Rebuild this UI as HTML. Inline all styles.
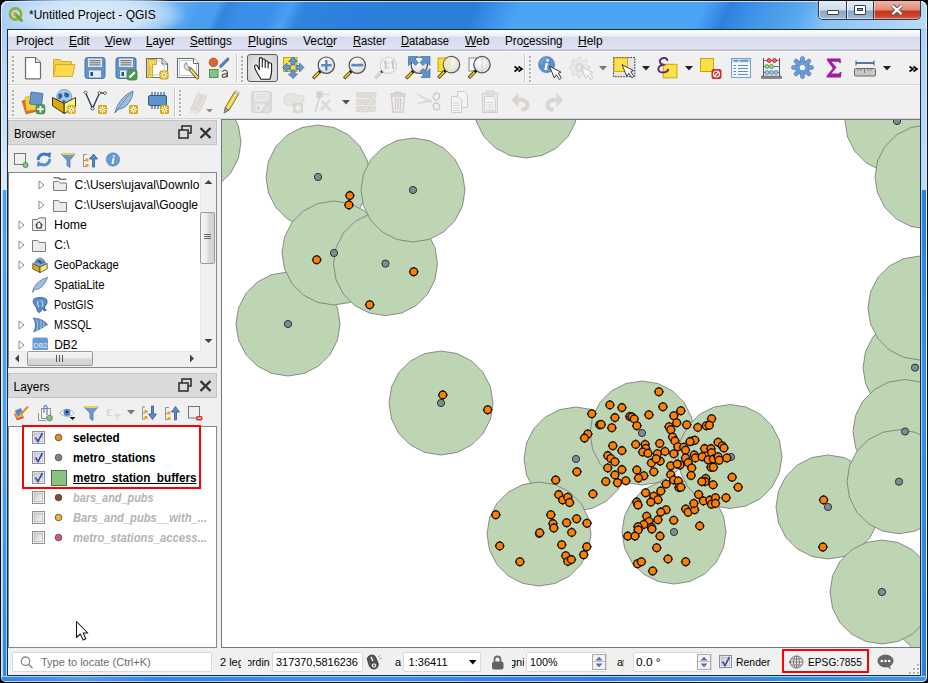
<!DOCTYPE html><html><head><meta charset="utf-8"><style>
*{margin:0;padding:0;box-sizing:border-box}
html,body{width:928px;height:683px;overflow:hidden;background:#000}
body{position:relative;font-family:"Liberation Sans",sans-serif;font-size:12px;color:#000}
div{position:absolute}
.t{white-space:pre;line-height:14px}
svg{position:absolute;overflow:visible}
</style></head><body><div style="left:0px;top:0px;width:928px;height:683px;background:#111;border-radius:8px 8px 6px 6px"></div><div style="left:1px;top:1px;width:926px;height:681px;border-radius:7px 7px 5px 5px;background:linear-gradient(112deg,#a9cdf3 0px,#b5d6f6 100px,#62acf2 178px,#4a9ef0 190px,#4a9ef0 262px,#2f80dc 285px,#3a90e8 320px,#2a84e0 350px,#2080e0 440px,#4aa0f0 475px,#4aa4f4 500px,#4aa4f4 650px,#3b8fe4 690px,#3b8fe4 720px,#5aaaf0 760px,#62b0f2 800px,#8cc6f6 840px,#b0d6f8 900px,#bfe0fa 960px);box-shadow:inset 1px 1px 0 rgba(255,255,255,.7),inset -1px -1px 0 rgba(255,255,255,.6)"></div><div style="left:1px;top:1px;width:926px;height:28px;border-radius:7px 7px 0 0;background:linear-gradient(115deg,#a9cdf3 6px,#b5d6f6 115px,#62acf2 165px,#4a9ef0 183px,#4a9ef0 198px,#3584dc 207px,#3a90e8 223px,#3a90e8 249px,#4aa0f0 264px,#2f84dc 278px,#2a80dc 323px,#2a7ed8 432px,#3a90e8 450px,#4aa4f4 473px,#4aa4f4 640px,#2f80dc 663px,#3a8ee6 681px,#5aaaf0 731px,#8cc4f4 758px,#b8dcf8 847px);box-shadow:inset 1px 1px 0 rgba(255,255,255,.7),inset -1px 0 0 rgba(255,255,255,.6)"></div><div style="left:0px;top:0px;width:240px;height:29px;background:radial-gradient(ellipse 95px 26px at 92px 15px,rgba(222,237,251,.95) 0%,rgba(208,228,249,.9) 60%,rgba(190,220,248,.6) 82%,rgba(180,215,246,0) 100%);border-radius:8px 0 0 0"></div><div style="left:2px;top:30px;width:5px;height:160px;background:linear-gradient(180deg,#aed0f4 0,#c8e0f8 100px,#dcebfa 160px)"></div><div style="left:2px;top:190px;width:5px;height:486px;background:linear-gradient(180deg,#4aa0f4 0,#4aa0f4 250px,#3a92ee 400px,#2f88e6 486px);box-shadow:inset 1px 0 0 #b8dcff,inset -1px 0 0 #a8d0fa"></div><div style="left:921px;top:30px;width:5px;height:160px;background:linear-gradient(180deg,#b0d4f8 0,#bcdcfa 160px)"></div><div style="left:921px;top:190px;width:5px;height:486px;background:linear-gradient(180deg,#2a80dc 0,#3a90ea 200px,#2a80dc 486px);box-shadow:inset 1px 0 0 #a8d0fa"></div><div style="left:2px;top:676px;width:924px;height:5px;background:linear-gradient(90deg,#2f86e4,#4aa0f0 80px,#2f86e4 160px,#3a92ea 340px,#2a80e0 600px,#3b92ea 900px);border-radius:0 0 4px 4px;box-shadow:inset 0 1px 0 #a8d0fa"></div><div style="left:7px;top:29px;width:914px;height:647px;background:#1c2a3a"></div><div style="left:8px;top:30px;width:912px;height:645px;background:#f0f0f0"></div><svg style="left:8px;top:7px" width="16" height="16" viewBox="0 0 16 16"><circle cx="7.5" cy="7" r="5.6" fill="none" stroke="#8fb32a" stroke-width="2.6"/><path d="M7 7 L13.5 13.5" stroke="#6aa53a" stroke-width="3" stroke-linecap="round"/><circle cx="7" cy="6.8" r="1.6" fill="#f08a2a"/></svg><div class="t" style="left:29px;top:7px;font-size:12px;color:#000;line-height:16px">*Untitled Project - QGIS</div><div style="left:818px;top:1px;width:103px;height:19px;border:1px solid #2e3b4e;border-top:none;border-radius:0 0 5px 5px;overflow:hidden;background:#2e3b4e"></div><div style="left:819px;top:1px;width:27px;height:18px;background:linear-gradient(180deg,#e4edf8 0,#cfdcec 9px,#8ea7c6 10px,#9cb4d0 16px,#b4c8de 19px);box-shadow:inset 1px 0 0 rgba(255,255,255,.6),inset 0 -1px 0 rgba(255,255,255,.4);border-radius:0 0 0 4px"></div><div style="left:847px;top:1px;width:26px;height:18px;background:linear-gradient(180deg,#e4edf8 0,#cfdcec 9px,#8ea7c6 10px,#9cb4d0 16px,#b4c8de 19px);box-shadow:inset 1px 0 0 rgba(255,255,255,.6),inset 0 -1px 0 rgba(255,255,255,.4)"></div><div style="left:874px;top:1px;width:46px;height:18px;background:linear-gradient(180deg,#eeb4a6 0,#e08c78 9px,#c8341a 10px,#cc4428 15px,#e07458 19px);box-shadow:inset 1px 0 0 rgba(255,255,255,.5),inset 0 -1px 0 rgba(255,255,255,.35);border-radius:0 0 4px 0"></div><div style="left:827px;top:10px;width:12px;height:5px;background:#fff;border:1px solid #3a3f4a;border-radius:1px"></div><div style="left:854px;top:5px;width:12px;height:10px;background:#fff;border:1px solid #3a3f4a;border-radius:1px"></div><div style="left:857px;top:8px;width:6px;height:3px;background:#8ea4bf;border:1px solid #3a3f4a"></div><svg style="left:890px;top:4px" width="14" height="12" viewBox="0 0 14 12"><path d="M2.5 1.8 L11.5 10.2 M11.5 1.8 L2.5 10.2" stroke="#4a4f5a" stroke-width="4"/><path d="M2.5 1.8 L11.5 10.2 M11.5 1.8 L2.5 10.2" stroke="#fff" stroke-width="2.3"/></svg><div style="left:8px;top:30px;width:912px;height:21px;background:linear-gradient(180deg,#fdfdfe 0,#eef0f8 6px,#d6dbed 7px,#dfe3f1 19px,#babdcf 20px,#babdcf 21px)"></div><div style="left:8px;top:51px;width:912px;height:1px;background:#fff"></div><div class="t" style="left:16px;top:33.74px;font-size:12px;line-height:14px;color:#000;">Pro<u>j</u>ect</div><div class="t" style="left:69px;top:33.74px;font-size:12px;line-height:14px;color:#000;"><u>E</u>dit</div><div class="t" style="left:105px;top:33.74px;font-size:12px;line-height:14px;color:#000;"><u>V</u>iew</div><div class="t" style="left:146px;top:33.74px;font-size:12px;line-height:14px;color:#000;transform:scaleX(0.9600);transform-origin:0 0;"><u>L</u>ayer</div><div class="t" style="left:190px;top:33.74px;font-size:12px;line-height:14px;color:#000;transform:scaleX(0.9650);transform-origin:0 0;"><u>S</u>ettings</div><div class="t" style="left:248px;top:33.74px;font-size:12px;line-height:14px;color:#000;"><u>P</u>lugins</div><div class="t" style="left:303px;top:33.74px;font-size:12px;line-height:14px;color:#000;">Vect<u>o</u>r</div><div class="t" style="left:353px;top:33.74px;font-size:12px;line-height:14px;color:#000;transform:scaleX(0.9300);transform-origin:0 0;"><u>R</u>aster</div><div class="t" style="left:401px;top:33.74px;font-size:12px;line-height:14px;color:#000;transform:scaleX(0.9350);transform-origin:0 0;"><u>D</u>atabase</div><div class="t" style="left:465px;top:33.74px;font-size:12px;line-height:14px;color:#000;"><u>W</u>eb</div><div class="t" style="left:505px;top:33.74px;font-size:12px;line-height:14px;color:#000;transform:scaleX(0.9700);transform-origin:0 0;">Pro<u>c</u>essing</div><div class="t" style="left:578px;top:33.74px;font-size:12px;line-height:14px;color:#000;"><u>H</u>elp</div><div style="left:8px;top:84px;width:912px;height:1px;background:#d5d5d5"></div><div style="left:8px;top:85px;width:912px;height:1px;background:#fff"></div><div style="left:8px;top:118px;width:912px;height:1px;background:#d5d5d5"></div><svg width="0" height="0" style="position:absolute"><defs><radialGradient id="lens" cx="0.4" cy="0.35" r="0.7"><stop offset="0" stop-color="#fff"/><stop offset="1" stop-color="#d8d8d8"/></radialGradient><linearGradient id="pressed" x1="0" y1="0" x2="0" y2="1"><stop offset="0" stop-color="#d9d9d9"/><stop offset="1" stop-color="#ececec"/></linearGradient></defs></svg><div style="left:12px;top:56px;width:2px;height:2px;background:#b0b0b0;box-shadow:1px 1px 0 #fafafa"></div><div style="left:12px;top:60px;width:2px;height:2px;background:#b0b0b0;box-shadow:1px 1px 0 #fafafa"></div><div style="left:12px;top:64px;width:2px;height:2px;background:#b0b0b0;box-shadow:1px 1px 0 #fafafa"></div><div style="left:12px;top:68px;width:2px;height:2px;background:#b0b0b0;box-shadow:1px 1px 0 #fafafa"></div><div style="left:12px;top:72px;width:2px;height:2px;background:#b0b0b0;box-shadow:1px 1px 0 #fafafa"></div><div style="left:12px;top:76px;width:2px;height:2px;background:#b0b0b0;box-shadow:1px 1px 0 #fafafa"></div><div style="left:12px;top:80px;width:2px;height:2px;background:#b0b0b0;box-shadow:1px 1px 0 #fafafa"></div><div style="left:236px;top:54px;width:1px;height:28px;background:#c8c8c8;box-shadow:1px 0 0 #fff"></div><div style="left:241px;top:56px;width:2px;height:2px;background:#b0b0b0;box-shadow:1px 1px 0 #fafafa"></div><div style="left:241px;top:60px;width:2px;height:2px;background:#b0b0b0;box-shadow:1px 1px 0 #fafafa"></div><div style="left:241px;top:64px;width:2px;height:2px;background:#b0b0b0;box-shadow:1px 1px 0 #fafafa"></div><div style="left:241px;top:68px;width:2px;height:2px;background:#b0b0b0;box-shadow:1px 1px 0 #fafafa"></div><div style="left:241px;top:72px;width:2px;height:2px;background:#b0b0b0;box-shadow:1px 1px 0 #fafafa"></div><div style="left:241px;top:76px;width:2px;height:2px;background:#b0b0b0;box-shadow:1px 1px 0 #fafafa"></div><div style="left:241px;top:80px;width:2px;height:2px;background:#b0b0b0;box-shadow:1px 1px 0 #fafafa"></div><div style="left:524px;top:54px;width:1px;height:28px;background:#c8c8c8;box-shadow:1px 0 0 #fff"></div><div style="left:529px;top:56px;width:2px;height:2px;background:#b0b0b0;box-shadow:1px 1px 0 #fafafa"></div><div style="left:529px;top:60px;width:2px;height:2px;background:#b0b0b0;box-shadow:1px 1px 0 #fafafa"></div><div style="left:529px;top:64px;width:2px;height:2px;background:#b0b0b0;box-shadow:1px 1px 0 #fafafa"></div><div style="left:529px;top:68px;width:2px;height:2px;background:#b0b0b0;box-shadow:1px 1px 0 #fafafa"></div><div style="left:529px;top:72px;width:2px;height:2px;background:#b0b0b0;box-shadow:1px 1px 0 #fafafa"></div><div style="left:529px;top:76px;width:2px;height:2px;background:#b0b0b0;box-shadow:1px 1px 0 #fafafa"></div><div style="left:529px;top:80px;width:2px;height:2px;background:#b0b0b0;box-shadow:1px 1px 0 #fafafa"></div><svg style="left:21px;top:56px" width="24" height="24" viewBox="0 0 24 24"><path d="M4.5 1.5 H14.5 L19.5 6.5 V22 a0.8 0.8 0 0 1 -0.8 0.8 H5.3 a0.8 0.8 0 0 1 -0.8 -0.8 Z" fill="#fff" stroke="#6b6b6b" stroke-width="1.2"/><path d="M14.5 1.5 V6.5 H19.5" fill="#e8e8e8" stroke="#6b6b6b" stroke-width="1.1"/></svg><svg style="left:52px;top:56px" width="24" height="24" viewBox="0 0 24 24"><path d="M1.5 3.5 H8 L9 5.5 H19.5 V20.5 H1.5 Z" fill="#f7cf45" stroke="#d6ad22" stroke-width="1"/><path d="M3.8 8.5 H23 L20.3 20.5 H1.5 Z" fill="#fcd94f" stroke="#d6ad22" stroke-width="1"/></svg><svg style="left:83px;top:56px" width="24" height="24" viewBox="0 0 24 24"><rect x="2.0" y="1.5" width="20" height="21" rx="2.5" fill="#5f93cc" stroke="#4677b3" stroke-width="1"/><rect x="5.0" y="2.5" width="14" height="8.5" fill="#e6e6e6"/><path d="M6.5 4.7 H17.5 M6.5 6.8 H17.5 M6.5 8.9 H17.5" stroke="#555" stroke-width="0.9"/><rect x="6.0" y="14.5" width="12" height="7" fill="#ececec"/><rect x="7.5" y="16" width="2.5" height="4" fill="#1f4f86"/></svg><svg style="left:114px;top:56px" width="24" height="24" viewBox="0 0 24 24"><rect x="2.0" y="1.5" width="20" height="21" rx="2.5" fill="#5f93cc" stroke="#4677b3" stroke-width="1"/><rect x="5.0" y="2.5" width="14" height="8.5" fill="#e6e6e6"/><path d="M6.5 4.7 H17.5 M6.5 6.8 H17.5 M6.5 8.9 H17.5" stroke="#555" stroke-width="0.9"/><rect x="6.0" y="14.5" width="12" height="7" fill="#ececec"/><rect x="7.5" y="16" width="2.5" height="4" fill="#1f4f86"/><rect x="13" y="14" width="10" height="10" rx="2" fill="#4f9a55" stroke="#3f7f44" stroke-width="0.8"/><path d="M15.5 21.5 L20.8 16.2" stroke="#fff" stroke-width="2"/></svg><svg style="left:145px;top:56px" width="24" height="24" viewBox="0 0 24 24"><path d="M1.5 2.5 H17 L22.5 8 V21.5 H1.5 Z" fill="#fff" stroke="#6b6b6b" stroke-width="1.1"/><path d="M17 2.5 V8 H22.5" fill="#eee" stroke="#6b6b6b" stroke-width="1"/><rect x="6" y="5" width="13" height="14" fill="none" stroke="#a9c5ec" stroke-width="0.9"/><path d="M3 3.5 H11.5 V8.5 H7.5 V21.5 H3 Z" fill="#f4d45a" stroke="#c9a21a" stroke-width="0.9"/><path d="M4 11 H6 M4 13.5 H6 M4 16 H6 M4 18.5 H6" stroke="#c9a21a" stroke-width="0.7"/><rect x="14.5" y="14.5" width="9" height="9" rx="1.8" fill="#d3a60a"/><g stroke="#fff" stroke-width="1.05" stroke-linecap="round"><path d="M19.0 19.0 L22.40 19.00" /><path d="M19.0 19.0 L21.40 21.40" /><path d="M19.0 19.0 L19.00 22.40" /><path d="M19.0 19.0 L16.60 21.40" /><path d="M19.0 19.0 L15.60 19.00" /><path d="M19.0 19.0 L16.60 16.60" /><path d="M19.0 19.0 L19.00 15.60" /><path d="M19.0 19.0 L21.40 16.60" /></g><circle cx="19.0" cy="19.0" r="1" fill="#d3a60a"/></svg><svg style="left:176px;top:56px" width="24" height="24" viewBox="0 0 24 24"><path d="M1.5 2.5 H17.5 L22.5 7.5 V21.5 H1.5 Z" fill="#fff" stroke="#6b6b6b" stroke-width="1.1"/><rect x="3.5" y="4.5" width="17" height="15" fill="none" stroke="#a9c5ec" stroke-width="0.9"/><path d="M17.5 2.5 V7.5 H22.5" fill="#fff" stroke="#6b6b6b" stroke-width="1"/><path d="M14.5 13.5 L21.5 21.5" stroke="#5a4a10" stroke-width="3.6" stroke-linecap="round"/><path d="M14.5 13.5 L21.5 21.5" stroke="#ecd870" stroke-width="2.2" stroke-linecap="round"/><path d="M10.5 6.5 A4 4 0 1 0 15.8 11.8 L13.8 12.2 L11.2 9.6 Z" fill="#e8e8e8" stroke="#8a8a8a" stroke-width="1"/><path d="M12.5 11 L15 13.5" stroke="#8a8a8a" stroke-width="2.2"/></svg><svg style="left:207px;top:56px" width="24" height="24" viewBox="0 0 24 24"><circle cx="6.4" cy="6.4" r="4.3" fill="#d8682f" stroke="#a84a18" stroke-width="0.7"/><path d="M13.8 10.2 L20.8 3.2" stroke="#2f5a90" stroke-width="3" stroke-linecap="round"/><path d="M13.8 10.2 L20.8 3.2" stroke="#5b8dc8" stroke-width="1.6" stroke-linecap="round"/><rect x="2.5" y="13.5" width="8.5" height="8" fill="#8fbc8f" stroke="#4b9a4b" stroke-width="1"/><path d="M15.2 15.8 Q16.5 14 18.5 14.3 Q20.3 14.6 20.3 16.8 V21.3 M20.2 17.8 Q17.5 17.6 16 18.4 Q14.8 19.2 15.2 20.4 Q15.8 21.6 17.6 21.2 Q19.5 20.8 20.2 19.2" fill="none" stroke="#3a3a3a" stroke-width="1.1"/></svg><div style="left:247px;top:54px;width:31px;height:28px;border:1px solid #5c5c5c;border-radius:3px;background:radial-gradient(ellipse at 50% 60%,#ececec 0,#e2e2e2 50%,#cdcdcd 100%)"></div><svg style="left:251px;top:56px" width="24" height="24" viewBox="0 0 24 24"><path d="M10 23.2 L6.5 17.5 C5 15 3.5 12.5 3.6 10.2 C3.8 8.6 5.6 8.6 6.4 10 L8.3 13.5 V3 C8.3 1.2 11.3 1.2 11.3 3 V11 V4.3 C11.3 2.5 14.2 2.5 14.2 4.3 V11.5 V6 C14.2 4.3 17.1 4.3 17.1 6 V12 V8 C17.1 6.4 20.6 6.4 20.6 8 V15 C20.6 18 19.6 20.5 19 23.2 Z" fill="#fff" stroke="#1a1a1a" stroke-width="1.1" stroke-linejoin="round"/></svg><svg style="left:282px;top:56px" width="24" height="24" viewBox="0 0 24 24"><rect x="1.5" y="1.5" width="13.5" height="14" fill="#f9e04a" stroke="#c7a800" stroke-width="1"/><path d="M11 1 L15.5 5.5 H13 V9 H9 V5.5 H6.5 Z M11 22.5 L15.5 18 H13 V14 H9 V18 H6.5 Z M0.5 11.5 L5 7 V9.5 H8.5 V13.5 H5 V16 Z M22 11.5 L17.5 7 V9.5 H14 V13.5 H17.5 V16 Z" fill="#6796cc" stroke="#3f6ea8" stroke-width="0.8"/></svg><svg style="left:312px;top:56px" width="24" height="24" viewBox="0 0 24 24"><path d="M1.104000000000001 22.396 L7.904000000000001 15.596" stroke="#3a3000" stroke-width="3.2" stroke-linecap="butt"/><path d="M1.604000000000001 21.896 L7.104000000000001 16.396" stroke="#f2c31a" stroke-width="1.8"/><circle cx="8.204" cy="15.296" r="1.5" fill="#111"/><circle cx="14.3" cy="9.2" r="8.2" fill="url(#lens)" stroke="#505050" stroke-width="1.2"/><path d="M9.2 9.2 H19.6 M14.3 4 V14.4" stroke="#5b8ac4" stroke-width="2.5"/></svg><svg style="left:343px;top:56px" width="24" height="24" viewBox="0 0 24 24"><path d="M1.104000000000001 22.396 L7.904000000000001 15.596" stroke="#3a3000" stroke-width="3.2" stroke-linecap="butt"/><path d="M1.604000000000001 21.896 L7.104000000000001 16.396" stroke="#f2c31a" stroke-width="1.8"/><circle cx="8.204" cy="15.296" r="1.5" fill="#111"/><circle cx="14.3" cy="9.2" r="8.2" fill="url(#lens)" stroke="#505050" stroke-width="1.2"/><path d="M9.6 9.2 H19" stroke="#5b8ac4" stroke-width="2.8" stroke-linecap="round"/></svg><svg style="left:374px;top:56px" width="24" height="24" viewBox="0 0 24 24"><path d="M1.104000000000001 22.396 L7.904000000000001 15.596" stroke="#d0ccc4" stroke-width="3.2" stroke-linecap="butt"/><path d="M1.604000000000001 21.896 L7.104000000000001 16.396" stroke="#dcd8d0" stroke-width="1.8"/><circle cx="8.204" cy="15.296" r="1.5" fill="#111"/><circle cx="14.3" cy="9.2" r="8.2" fill="#f2f2f2" stroke="#d4d4d4" stroke-width="1.2"/><path d="M9.8 7 L11.6 5.5 V13 M17.2 7 L19 5.5 V13" fill="none" stroke="#c4c4c4" stroke-width="1.7"/><circle cx="14.3" cy="7.5" r="0.9" fill="#c4c4c4"/><circle cx="14.3" cy="11.5" r="0.9" fill="#c4c4c4"/></svg><svg style="left:405px;top:56px" width="24" height="24" viewBox="0 0 24 24"><path d="M1.104000000000001 22.396 L7.904000000000001 15.596" stroke="#3a3000" stroke-width="3.2" stroke-linecap="butt"/><path d="M1.604000000000001 21.896 L7.104000000000001 16.396" stroke="#f2c31a" stroke-width="1.8"/><circle cx="8.204" cy="15.296" r="1.5" fill="#111"/><circle cx="14.3" cy="9.2" r="8.2" fill="url(#lens)" stroke="#505050" stroke-width="1.2"/><path d="M3.5 0.5 H12.5 L10 3 L13.5 6.5 L10.5 9.5 L7 6 L3.5 9.5 Z M25 0.5 H16 L18.5 3 L15 6.5 L18 9.5 L21.5 6 L25 9.5 Z M25 21.5 H16 L18.5 19 L15 15.5 L18 12.5 L21.5 16 L25 12.5 Z" fill="#5f93cc" stroke="#3f6ea8" stroke-width="0.7" stroke-linejoin="round"/></svg><svg style="left:436px;top:56px" width="24" height="24" viewBox="0 0 24 24"><rect x="2" y="2" width="8.5" height="13.5" fill="#f9dc3a" stroke="#c7a800" stroke-width="1"/><path d="M2.3039999999999994 21.796 L9.104 14.995999999999999" stroke="#3a3000" stroke-width="3.2" stroke-linecap="butt"/><path d="M2.8039999999999994 21.296 L8.303999999999998 15.796" stroke="#f2c31a" stroke-width="1.8"/><circle cx="9.404" cy="14.695999999999998" r="1.5" fill="#111"/><circle cx="15.5" cy="8.6" r="8.2" fill="url(#lens)" stroke="#505050" stroke-width="1.2"/><path d="M15.5 0.8 A7.8 7.8 0 0 0 15.5 16.4 Z" fill="#ece6c6" opacity="0.9"/></svg><svg style="left:467px;top:56px" width="24" height="24" viewBox="0 0 24 24"><rect x="2" y="2" width="9" height="13" fill="#f6f6f6" stroke="#8a8a8a" stroke-width="1"/><path d="M1.8039999999999994 21.796 L8.604 14.995999999999999" stroke="#3a3000" stroke-width="3.2" stroke-linecap="butt"/><path d="M2.3039999999999994 21.296 L7.803999999999999 15.796" stroke="#f2c31a" stroke-width="1.8"/><circle cx="8.904" cy="14.695999999999998" r="1.5" fill="#111"/><circle cx="15" cy="8.6" r="8.2" fill="url(#lens)" stroke="#505050" stroke-width="1.2"/><path d="M15 0.8 V16.4" stroke="#c8c8c8" stroke-width="1"/></svg><svg style="left:514px;top:66px" width="9" height="6" viewBox="0 0 9 6"><path d="M0.5 0.5 L4 3 L0.5 5.5 M4.5 0.5 L8 3 L4.5 5.5" fill="none" stroke="#000" stroke-width="1.6"/></svg><svg style="left:538px;top:56px" width="24" height="24" viewBox="0 0 24 24"><circle cx="8.6" cy="8.6" r="8.1" fill="#5f90cc" stroke="#4c7cb8" stroke-width="0.6"/><path d="M3 8 A6.5 6.5 0 0 1 9 2.2" stroke="#8fb4e0" stroke-width="0.9" fill="none"/><circle cx="9.6" cy="4.4" r="1.3" fill="#fff"/><path d="M7.5 7.2 H10.2 L8.8 12.2 Q8.6 13 9.8 12.4 L9.6 13.4 Q7.8 14.5 6.6 13.8 Q6.1 13.4 6.5 12.3 L7.6 8.4 H6.9 Z" fill="#fff"/><path d="M11.5 10.2 L16.3 22.0 L18.3 18.799999999999997 L21.5 23.6 L23.3 21.9 L20.3 17.2 L23.0 16.2 Z" fill="#fff" stroke="#2a2a2a" stroke-width="0.9" stroke-linejoin="round"/></svg><svg style="left:569px;top:56px" width="24" height="24" viewBox="0 0 24 24"><g opacity="0.5"><path d="M9.5 1.5 L11.5 1.5 L12.2 4 L14.5 5 L16.8 3.8 L18.2 5.2 L17 7.5 L18 9.8 L20.5 10.5 V12.5 L18 13.2 L17 15.5 L18.2 17.8 L16.8 19.2 L14.5 18 L12.2 19 L11.5 21.5 H9.5 L8.8 19 L6.5 18 L4.2 19.2 L2.8 17.8 L4 15.5 L3 13.2 L0.5 12.5 V10.5 L3 9.8 L4 7.5 L2.8 5.2 L4.2 3.8 L6.5 5 L8.8 4 Z" fill="#e6e6e6" stroke="#b5b5b5" stroke-width="0.8"/><circle cx="10.5" cy="11.5" r="5" fill="#c8c8c8"/><path d="M9 9 L13 11.5 L9 14 Z" fill="#eee"/><path d="M12 10.5 L16.8 22.3 L18.8 19.1 L22 23.9 L23.8 22.2 L20.8 17.5 L23.5 16.5 Z" fill="#fff" stroke="#999" stroke-width="0.9" stroke-linejoin="round"/></g></svg><svg style="left:599px;top:66px" width="8" height="5" viewBox="0 0 8 5"><path d="M0 0 L8 0 L4 4.5 Z" fill="#777"/></svg><svg style="left:612px;top:56px" width="24" height="24" viewBox="0 0 24 24"><rect x="1.5" y="1.5" width="21.3" height="19.2" fill="#e6e6e6" stroke="#222" stroke-width="0.9" stroke-dasharray="1.7 1.1"/><rect x="2" y="2" width="13.5" height="13.5" fill="#fce24a" stroke="#c9a800" stroke-width="0.9"/><path d="M10 8.6 L14.8 20.4 L16.8 17.2 L20 22.0 L21.8 20.299999999999997 L18.8 15.6 L21.5 14.6 Z" fill="#fff" stroke="#2a2a2a" stroke-width="0.9" stroke-linejoin="round"/></svg><svg style="left:641.5px;top:66px" width="8" height="5" viewBox="0 0 8 5"><path d="M0 0 L8 0 L4 4.5 Z" fill="#222"/></svg><svg style="left:656px;top:56px" width="24" height="24" viewBox="0 0 24 24"><rect x="7.2" y="8.3" width="13.8" height="13.5" fill="#fce24a" stroke="#c9a800" stroke-width="1"/><path d="M11.3 4.2 C11 2.5 9.5 1.8 7.5 2 C4.5 2.4 3.3 4.5 4 6.3 C4.5 7.8 6 8.6 7.8 8.8 C4.8 8.9 2.2 10.5 2.3 13 C2.5 15.5 5 16.6 7.8 16.4 C10.3 16.2 11.8 15 12.2 13.6" fill="none" stroke="#5a2a78" stroke-width="1.9" stroke-linecap="round"/><path d="M7.8 8.8 H9.5" stroke="#5a2a78" stroke-width="1.2"/></svg><svg style="left:685px;top:66px" width="8" height="5" viewBox="0 0 8 5"><path d="M0 0 L8 0 L4 4.5 Z" fill="#222"/></svg><svg style="left:699px;top:56px" width="24" height="24" viewBox="0 0 24 24"><rect x="1.5" y="2.5" width="13" height="13" fill="#f9e04a" stroke="#c7a800" stroke-width="1"/><rect x="12.5" y="13" width="10" height="10" rx="2" fill="#d42a2a"/><circle cx="17.5" cy="18" r="3" fill="none" stroke="#fff" stroke-width="1.2"/><path d="M15.5 20 L19.5 16" stroke="#fff" stroke-width="1.2"/></svg><svg style="left:729px;top:56px" width="24" height="24" viewBox="0 0 24 24"><rect x="2.5" y="2.5" width="19" height="19" fill="#f4f8fd" stroke="#7aa3d6" stroke-width="1.1"/><rect x="3" y="3" width="18" height="3.5" fill="#bcd3ef"/><path d="M5 4.7 H9 M11 4.7 H19" stroke="#5b8dc8" stroke-width="1.4"/><path d="M4.5 9.5 H7 M9 9.5 H19 M4.5 12.5 H7 M9 12.5 H19 M4.5 15.5 H7 M9 15.5 H19 M4.5 18.5 H7 M9 18.5 H19" stroke="#5b8dc8" stroke-width="1"/></svg><svg style="left:760px;top:56px" width="24" height="24" viewBox="0 0 24 24"><path d="M3.5 2 V20 M19.5 2 V20" stroke="#555" stroke-width="1"/><path d="M3.5 4.5 H19.5 M3.5 10.5 H19.5 M3.5 16.5 H19.5" stroke="#555" stroke-width="0.8"/><rect x="1.5" y="20" width="20" height="2.5" fill="#888" stroke="#555" stroke-width="0.5"/><g stroke-width="0.8"><circle cx="9" cy="4.5" r="2" fill="#f06060" stroke="#c02020"/><circle cx="14.5" cy="4.5" r="2" fill="#f06060" stroke="#c02020"/><circle cx="7" cy="10.5" r="2" fill="#9ad49a" stroke="#3a9a3a"/><circle cx="11.5" cy="10.5" r="2" fill="#9ad49a" stroke="#3a9a3a"/><circle cx="7" cy="16.5" r="2" fill="#9fc3ea" stroke="#4a80c0"/><circle cx="11.5" cy="16.5" r="2" fill="#9fc3ea" stroke="#4a80c0"/><circle cx="16" cy="16.5" r="2" fill="#9fc3ea" stroke="#4a80c0"/></g></svg><svg style="left:791px;top:56px" width="24" height="24" viewBox="0 0 24 24"><g transform="translate(11.5 11.5)"><circle r="7" fill="#6d9bd6" stroke="#4a7ab8" stroke-width="0.8"/><rect x="-2" y="-11" width="4" height="6" rx="1.8" fill="#6d9bd6" stroke="#4a7ab8" stroke-width="0.6" transform="rotate(0)"/><rect x="-2" y="-11" width="4" height="6" rx="1.8" fill="#6d9bd6" stroke="#4a7ab8" stroke-width="0.6" transform="rotate(45)"/><rect x="-2" y="-11" width="4" height="6" rx="1.8" fill="#6d9bd6" stroke="#4a7ab8" stroke-width="0.6" transform="rotate(90)"/><rect x="-2" y="-11" width="4" height="6" rx="1.8" fill="#6d9bd6" stroke="#4a7ab8" stroke-width="0.6" transform="rotate(135)"/><rect x="-2" y="-11" width="4" height="6" rx="1.8" fill="#6d9bd6" stroke="#4a7ab8" stroke-width="0.6" transform="rotate(180)"/><rect x="-2" y="-11" width="4" height="6" rx="1.8" fill="#6d9bd6" stroke="#4a7ab8" stroke-width="0.6" transform="rotate(225)"/><rect x="-2" y="-11" width="4" height="6" rx="1.8" fill="#6d9bd6" stroke="#4a7ab8" stroke-width="0.6" transform="rotate(270)"/><rect x="-2" y="-11" width="4" height="6" rx="1.8" fill="#6d9bd6" stroke="#4a7ab8" stroke-width="0.6" transform="rotate(315)"/><circle r="5.8" fill="#6d9bd6"/><circle r="2.6" fill="#fff"/></g></svg><svg style="left:822px;top:56px" width="24" height="24" viewBox="0 0 24 24"><path d="M5 2.5 H18.5 L19 7 H17.5 L16.5 5.8 H9.5 L14.5 11.5 L9.5 17.5 H17 L18 16 H19.5 L18.8 21.5 H4.5 V20 L10.8 12.2 L4.8 4 Z" fill="#a21aa6"/></svg><svg style="left:853px;top:56px" width="24" height="24" viewBox="0 0 24 24"><path d="M3 7 H21" stroke="#2e5a8a" stroke-width="1.6"/><path d="M3 4.5 V9.5 M21 4.5 V9.5" stroke="#2e5a8a" stroke-width="1"/><rect x="1.5" y="12.5" width="21" height="7.5" rx="1" fill="#c8c8c8" stroke="#6a6a6a" stroke-width="1"/><path d="M5 12.5 V15 M8 12.5 V15 M11.5 12.5 V17 M15 12.5 V15 M18 12.5 V15" stroke="#6a6a6a" stroke-width="0.8"/></svg><svg style="left:883px;top:66px" width="8" height="5" viewBox="0 0 8 5"><path d="M0 0 L8 0 L4 4.5 Z" fill="#222"/></svg><svg style="left:909px;top:66px" width="9" height="6" viewBox="0 0 9 6"><path d="M0.5 0.5 L4 3 L0.5 5.5 M4.5 0.5 L8 3 L4.5 5.5" fill="none" stroke="#000" stroke-width="1.6"/></svg><div style="left:12px;top:90px;width:2px;height:2px;background:#b0b0b0;box-shadow:1px 1px 0 #fafafa"></div><div style="left:12px;top:94px;width:2px;height:2px;background:#b0b0b0;box-shadow:1px 1px 0 #fafafa"></div><div style="left:12px;top:98px;width:2px;height:2px;background:#b0b0b0;box-shadow:1px 1px 0 #fafafa"></div><div style="left:12px;top:102px;width:2px;height:2px;background:#b0b0b0;box-shadow:1px 1px 0 #fafafa"></div><div style="left:12px;top:106px;width:2px;height:2px;background:#b0b0b0;box-shadow:1px 1px 0 #fafafa"></div><div style="left:12px;top:110px;width:2px;height:2px;background:#b0b0b0;box-shadow:1px 1px 0 #fafafa"></div><div style="left:12px;top:114px;width:2px;height:2px;background:#b0b0b0;box-shadow:1px 1px 0 #fafafa"></div><div style="left:174px;top:87px;width:1px;height:30px;background:#c8c8c8;box-shadow:1px 0 0 #fff"></div><div style="left:179px;top:90px;width:2px;height:2px;background:#b0b0b0;box-shadow:1px 1px 0 #fafafa"></div><div style="left:179px;top:94px;width:2px;height:2px;background:#b0b0b0;box-shadow:1px 1px 0 #fafafa"></div><div style="left:179px;top:98px;width:2px;height:2px;background:#b0b0b0;box-shadow:1px 1px 0 #fafafa"></div><div style="left:179px;top:102px;width:2px;height:2px;background:#b0b0b0;box-shadow:1px 1px 0 #fafafa"></div><div style="left:179px;top:106px;width:2px;height:2px;background:#b0b0b0;box-shadow:1px 1px 0 #fafafa"></div><div style="left:179px;top:110px;width:2px;height:2px;background:#b0b0b0;box-shadow:1px 1px 0 #fafafa"></div><div style="left:179px;top:114px;width:2px;height:2px;background:#b0b0b0;box-shadow:1px 1px 0 #fafafa"></div><svg style="left:21px;top:90px" width="24" height="24" viewBox="0 0 24 24"><path d="M1 11 L12 7.5 L16.5 21 L5 24 Z" fill="#df6a33" stroke="#b84a18" stroke-width="0.5"/><path d="M4 7 L14.5 5.5 L16.5 19.5 L5.5 21 Z" fill="#f7cf3a" stroke="#c9a21a" stroke-width="0.5"/><path d="M10 2 L22 3.5 L20.5 15.5 L8.5 14 Z" fill="#6796cc" stroke="#3f6ea8" stroke-width="0.8"/><rect x="15" y="14.5" width="9" height="9.5" rx="2" fill="#4f9a55" stroke="#3f7f44" stroke-width="0.5"/><path d="M19.5 16 V22.5 M16.3 19.2 H22.7" stroke="#fff" stroke-width="1.8"/></svg><svg style="left:52px;top:90px" width="24" height="24" viewBox="0 0 24 24"><circle cx="12.2" cy="7" r="7.6" fill="#a9c8ec" stroke="#6f9bd0" stroke-width="0.8"/><path d="M6 5 Q8 2 10 4 Q11 6 9.5 8 Q8 10 6.5 9 Z M12 3 Q15 1.5 17 4 Q18 7 15 7.5 Q13 8 12.5 6 Z M10.5 10 Q13 9.5 14 12 L11 13 Z" fill="#2f5f98"/><path d="M0.5 7.5 L12.2 13.5 V23.5 L0.5 15.8 Z" fill="#dcaa00" stroke="#222" stroke-width="0.9" stroke-linejoin="round"/><path d="M12.2 13.5 L23.5 7.5 V17 L12.2 23.5 Z" fill="#fcf67c" stroke="#222" stroke-width="0.9" stroke-linejoin="round"/><rect x="15.2" y="15.2" width="8.6" height="8.6" rx="1.8" fill="#d3a60a"/><g stroke="#fff" stroke-width="1.05" stroke-linecap="round"><path d="M19.5 19.5 L22.90 19.50" /><path d="M19.5 19.5 L21.90 21.90" /><path d="M19.5 19.5 L19.50 22.90" /><path d="M19.5 19.5 L17.10 21.90" /><path d="M19.5 19.5 L16.10 19.50" /><path d="M19.5 19.5 L17.10 17.10" /><path d="M19.5 19.5 L19.50 16.10" /><path d="M19.5 19.5 L21.90 17.10" /></g><circle cx="19.5" cy="19.5" r="1" fill="#d3a60a"/></svg><svg style="left:83px;top:90px" width="24" height="24" viewBox="0 0 24 24"><path d="M2.5 2.5 L9.5 18.5 L16.5 3" fill="none" stroke="#2c3e50" stroke-width="1.4"/><path d="M16.5 3 H22" stroke="#2c3e50" stroke-width="1.4"/><g fill="#fff" stroke="#2c3e50" stroke-width="0.9"><path d="M2.5 0.8 L4.2 2.5 L2.5 4.2 L0.8 2.5 Z"/><path d="M16.5 1.3 L18.2 3 L16.5 4.7 L14.8 3 Z"/><path d="M22 1.3 L23.7 3 L22 4.7 L20.3 3 Z"/><circle cx="9.5" cy="18.5" r="1.5"/></g><rect x="15" y="15" width="9" height="9" rx="1.8" fill="#d3a60a"/><g stroke="#fff" stroke-width="1.05" stroke-linecap="round"><path d="M19.5 19.5 L22.90 19.50" /><path d="M19.5 19.5 L21.90 21.90" /><path d="M19.5 19.5 L19.50 22.90" /><path d="M19.5 19.5 L17.10 21.90" /><path d="M19.5 19.5 L16.10 19.50" /><path d="M19.5 19.5 L17.10 17.10" /><path d="M19.5 19.5 L19.50 16.10" /><path d="M19.5 19.5 L21.90 17.10" /></g><circle cx="19.5" cy="19.5" r="1" fill="#d3a60a"/></svg><svg style="left:114px;top:90px" width="24" height="24" viewBox="0 0 24 24"><path d="M1 23 C3 14 9 5 19 1 C19 6 16 12 13 15 C10 18 6 19 3.5 19.5 Z" fill="#9fbde0" stroke="#4a6a9a" stroke-width="0.8"/><path d="M2 22 C6 16 11 9 17 3" fill="none" stroke="#4a6a9a" stroke-width="0.6"/><rect x="15" y="15" width="9" height="9" rx="1.8" fill="#d3a60a"/><g stroke="#fff" stroke-width="1.05" stroke-linecap="round"><path d="M19.5 19.5 L22.90 19.50" /><path d="M19.5 19.5 L21.90 21.90" /><path d="M19.5 19.5 L19.50 22.90" /><path d="M19.5 19.5 L17.10 21.90" /><path d="M19.5 19.5 L16.10 19.50" /><path d="M19.5 19.5 L17.10 17.10" /><path d="M19.5 19.5 L19.50 16.10" /><path d="M19.5 19.5 L21.90 17.10" /></g><circle cx="19.5" cy="19.5" r="1" fill="#d3a60a"/></svg><svg style="left:145px;top:90px" width="24" height="24" viewBox="0 0 24 24"><path d="M7 2 V6 M10 2 V6 M13 2 V6 M16 2 V6 M19 2 V6 M7 15 V19 M10 15 V19 M13 15 V19 M16 15 V19" stroke="#1f3f6a" stroke-width="1"/><rect x="3.5" y="5.5" width="18" height="10" rx="1.5" fill="#5f93cc" stroke="#2f5a90" stroke-width="1"/><rect x="15" y="15" width="9" height="9" rx="1.8" fill="#d3a60a"/><g stroke="#fff" stroke-width="1.05" stroke-linecap="round"><path d="M19.5 19.5 L22.90 19.50" /><path d="M19.5 19.5 L21.90 21.90" /><path d="M19.5 19.5 L19.50 22.90" /><path d="M19.5 19.5 L17.10 21.90" /><path d="M19.5 19.5 L16.10 19.50" /><path d="M19.5 19.5 L17.10 17.10" /><path d="M19.5 19.5 L19.50 16.10" /><path d="M19.5 19.5 L21.90 17.10" /></g><circle cx="19.5" cy="19.5" r="1" fill="#d3a60a"/></svg><svg style="left:186px;top:90px" width="24" height="24" viewBox="0 0 24 24"><g opacity="0.75"><path d="M5 18.5 L12 3.2 L15.5 4.8 L8.5 20.1 Z" fill="#dcd8d4" stroke="#c6c2be" stroke-width="0.8"/><path d="M5 18.5 L4.6 23 L8.5 20.1 Z" fill="#e6e6e6" stroke="#c8c8c8" stroke-width="0.6"/><path d="M10 20 L17 4.7 L20.5 6.3 L13.5 21.6 Z" fill="#dedad6" stroke="#c6c2be" stroke-width="0.8"/><path d="M10 20 L9.6 24 L13.5 21.6 Z" fill="#e8e8e8" stroke="#c8c8c8" stroke-width="0.6"/><path d="M12 3.2 L12.6 2 L16.1 3.6 L15.5 4.8 Z M17 4.7 L17.6 3.5 L21.1 5.1 L20.5 6.3 Z" fill="#f4f4f4" stroke="#ccc" stroke-width="0.5"/></g></svg><svg style="left:206px;top:109px" width="7" height="4" viewBox="0 0 7 4"><path d="M0 0 H7 L3.5 3.5 Z" fill="#8a8a8a"/></svg><svg style="left:219px;top:90px" width="24" height="24" viewBox="0 0 24 24"><path d="M6 18 L15.5 2 L19.5 4.3 L10 20.3 Z" fill="#e8d44a" stroke="#7a6a20" stroke-width="0.9"/><path d="M8.5 18.8 L17.5 3.2" stroke="#fff3a0" stroke-width="1"/><path d="M6 18 L5 23 L10 20.3 Z" fill="#a0a0a0" stroke="#555" stroke-width="0.7"/><path d="M15.5 2 L16.5 0.5 L20.5 2.8 L19.5 4.3 Z" fill="#f4f4f4" stroke="#888" stroke-width="0.6"/></svg><svg style="left:250px;top:90px" width="24" height="24" viewBox="0 0 24 24"><g opacity="0.42"><rect x="1.5" y="1.5" width="20" height="21" rx="2.5" fill="#c2c2c2" stroke="#b0b0b0" stroke-width="1"/><rect x="4.5" y="2.5" width="14" height="8.5" fill="#ececec"/><path d="M6 4.7 H17 M6 6.8 H17 M6 8.9 H17" stroke="#aaa" stroke-width="0.9"/><rect x="5.5" y="14.5" width="12" height="7" fill="#ececec"/><rect x="7" y="16" width="2.5" height="4" fill="#aaa"/><path d="M11 22 L20 7 L22.5 8.5 L13.5 23.5 Z" fill="#cbb9b0" stroke="#b8a8a0" stroke-width="0.6"/></g></svg><svg style="left:281px;top:90px" width="24" height="24" viewBox="0 0 24 24"><g opacity="0.5"><path d="M4 6 C6 2 13 3 16 5 C19 7 22 3 23 8 C24 13 20 14 15 15 C10 16 4 16 3 12 C2 10 3 8 4 6 Z" fill="#d8dcd8" stroke="#b8bcb8" stroke-width="0.8"/><rect x="12" y="13" width="10" height="10" rx="1" fill="#c2bcae"/><path d="M17 14.5 V21.5 M13.5 18 H20.5 M14.5 15.5 L19.5 20.5 M19.5 15.5 L14.5 20.5" stroke="#fff" stroke-width="1"/></g></svg><svg style="left:312px;top:90px" width="24" height="24" viewBox="0 0 24 24"><g opacity="0.5"><path d="M3 22 L8 6" stroke="#888" stroke-width="0.8"/><rect x="5" y="2" width="5" height="5" fill="#ccc" stroke="#999" stroke-width="0.8"/><circle cx="7.5" cy="4.5" r="1.2" fill="none" stroke="#777" stroke-width="0.6"/><path d="M10 4.5 H18" stroke="#bbb" stroke-width="1.2"/><path d="M9 20 L18 10 M10 11 L19 21" stroke="#c6c2b8" stroke-width="2.6"/></g></svg><svg style="left:342px;top:100px" width="8" height="5" viewBox="0 0 8 5"><path d="M0 0 L8 0 L4 4.5 Z" fill="#555"/></svg><svg style="left:355px;top:90px" width="24" height="24" viewBox="0 0 24 24"><g opacity="0.5"><rect x="1.5" y="2.5" width="19" height="5" fill="#d2ceba" stroke="#bab6a2" stroke-width="0.6"/><rect x="1.5" y="9.5" width="19" height="5" fill="#d2ceba" stroke="#bab6a2" stroke-width="0.6"/><rect x="1.5" y="16.5" width="19" height="5" fill="#d2ceba" stroke="#bab6a2" stroke-width="0.6"/><path d="M8 21 L19 3 L21.5 4.5 L10.5 22.5 Z" fill="#e0dcd8" stroke="#b0aaa6" stroke-width="0.7"/></g></svg><svg style="left:386px;top:90px" width="24" height="24" viewBox="0 0 24 24"><g opacity="0.45" fill="none" stroke="#b09a9a" stroke-width="1.3"><path d="M4 4 H20 M9 4 V2.3 H15 V4"/><path d="M5.5 6 L7 22 H17 L18.5 6 Z"/><path d="M9.5 8 V20 M12 8 V20 M14.5 8 V20"/></g></svg><svg style="left:417px;top:90px" width="24" height="24" viewBox="0 0 24 24"><g opacity="0.5"><path d="M0.5 4 L15 11.5 L13.5 13 Z" fill="#d8d8d8" stroke="#aaa" stroke-width="0.6"/><path d="M0.5 13.5 L15 11 L13.5 9.5 Z" fill="#e4e4e4" stroke="#aaa" stroke-width="0.6"/><g fill="none" stroke="#9a9a9a" stroke-width="1.2"><ellipse cx="19.5" cy="6.5" rx="3" ry="3.5" transform="rotate(30 19.5 6.5)"/><ellipse cx="19.5" cy="16.5" rx="3" ry="3.5" transform="rotate(-30 19.5 16.5)"/></g></g></svg><svg style="left:448px;top:90px" width="24" height="24" viewBox="0 0 24 24"><g opacity="0.45" fill="#f8f8f8" stroke="#999" stroke-width="0.9"><path d="M9.5 1.5 H16 L19.5 5 V17.5 H9.5 Z"/><path d="M3.5 6.5 H10 L13.5 10 V22.5 H3.5 Z"/><path d="M5.5 13 H11.5 M5.5 15.5 H11.5 M5.5 18 H11.5 M5.5 20.5 H11.5" stroke-width="0.7"/></g></svg><svg style="left:479px;top:90px" width="24" height="24" viewBox="0 0 24 24"><g opacity="0.45"><rect x="3.5" y="3.5" width="15" height="19" fill="#ece6da" stroke="#a89e8e" stroke-width="0.9"/><rect x="7" y="1" width="8" height="4" fill="#cfcfcf" stroke="#999" stroke-width="0.6"/><path d="M5.5 6.5 H13 L16.5 10 V21 H5.5 Z" fill="#fafafa" stroke="#999" stroke-width="0.8"/><path d="M7.5 12.5 H14.5 M7.5 15 H14.5 M7.5 17.5 H14.5 M7.5 20 H14.5" stroke="#999" stroke-width="0.7"/></g></svg><svg style="left:510px;top:90px" width="24" height="24" viewBox="0 0 24 24"><g opacity="0.5"><path d="M1.5 10 L8.5 3 V7.5 C15 7.5 19.5 10 19.5 15.5 C19.5 20 15 22.5 11 21 L11.5 17.5 C14 18 15.5 17 15.5 15 C15.5 12.5 12.5 12 8.5 12 V17 Z" fill="#c4bab2"/></g></svg><svg style="left:541px;top:90px" width="24" height="24" viewBox="0 0 24 24"><g opacity="0.5"><path d="M22.5 10 L15.5 3 V7.5 C9 7.5 4.5 10 4.5 15.5 C4.5 20 9 22.5 13 21 L12.5 17.5 C10 18 8.5 17 8.5 15 C8.5 12.5 11.5 12 15.5 12 V17 Z" fill="#b8c0bc"/></g></svg><div style="left:8px;top:120px;width:209px;height:25px;background:#dadada;border:1px solid #c4c4c4"></div><div class="t" style="left:13.5px;top:126.64px;font-size:12px;line-height:14px;color:#000;transform:scaleX(0.9407);transform-origin:0 0;">Browser</div><svg style="left:178px;top:125px" width="14" height="14" viewBox="0 0 14 14"><rect x="4" y="1" width="9" height="7" fill="none" stroke="#333" stroke-width="1.6"/><rect x="1" y="5" width="9" height="8" fill="#dadada" stroke="#333" stroke-width="1.6"/></svg><svg style="left:199px;top:127px" width="13" height="12" viewBox="0 0 13 12"><path d="M1.5 1 L11.5 11 M11.5 1 L1.5 11" stroke="#333" stroke-width="2.4"/></svg><svg style="left:13px;top:152px" width="16" height="16" viewBox="0 0 16 16"><rect x="1.5" y="1.5" width="11" height="11" fill="none" stroke="#777" stroke-width="1"/><circle cx="12.5" cy="13" r="2.6" fill="#8cc08c" stroke="#4a9a4a" stroke-width="1"/></svg><svg style="left:36px;top:151px" width="16" height="17" viewBox="0 0 16 17"><path d="M2.2 9 A5.8 5.8 0 0 1 11.8 4.5" fill="none" stroke="#3f7ac8" stroke-width="2.8"/><path d="M9.2 2.2 L15.2 1.6 L14 7.8 Z" fill="#3f7ac8"/><path d="M13.8 8 A5.8 5.8 0 0 1 4.2 12.5" fill="none" stroke="#5b8fd4" stroke-width="2.8"/><path d="M6.8 14.8 L0.8 15.4 L2 9.2 Z" fill="#5b8fd4"/></svg><svg style="left:60px;top:152px" width="16" height="16" viewBox="0 0 16 16"><path d="M1 2 H15 L10 8 V15.5 L7 13.5 V8 Z" fill="#6d9ad6" stroke="#4a7ab5" stroke-width="0.8"/><path d="M1.5 2.2 H14.5" stroke="#f2d630" stroke-width="1.6"/></svg><svg style="left:82px;top:152px" width="16" height="16" viewBox="0 0 16 16"><path d="M1.5 2.5 V14.5 M1.5 2.5 H5 M1.5 8.5 H4 M1.5 14.5 H4" stroke="#888" stroke-width="0.9" fill="none"/><rect x="3.5" y="6.5" width="3" height="3" fill="#f0a020"/><rect x="3.5" y="12" width="3" height="3" fill="#f0a020"/><path d="M10.5 15 V7 H7.5 L11.5 2 L15.5 7 H12.5 V15 Z" fill="#5b8dc8" stroke="#2f5a90" stroke-width="0.8"/></svg><svg style="left:106px;top:152px" width="16" height="16" viewBox="0 0 16 16"><circle cx="7" cy="7.5" r="6.7" fill="#6a98d0" stroke="#5582bd" stroke-width="0.6"/><circle cx="7.9" cy="4.2" r="1" fill="#fff"/><path d="M6.4 6.3 H8.6 L7.5 10.4 Q7.4 11 8.3 10.6 L8.1 11.4 Q6.7 12.2 5.8 11.7 Q5.4 11.4 5.7 10.5 L6.5 7.2 H5.9 Z" fill="#fff"/></svg><div style="left:8px;top:172px;width:209px;height:196px;background:#fff;border:1px solid #828790"></div><div style="left:9px;top:173px;width:191px;height:177px;overflow:hidden"><svg style="left:29px;top:6.599999999999994px" width="7" height="10" viewBox="0 0 7 10"><path d="M1 1 L6 5 L1 9 Z" fill="#fff" stroke="#8a8a8a" stroke-width="1"/></svg><svg style="left:44px;top:4.099999999999994px" width="14" height="14" viewBox="0 0 14 14"><path d="M0.5 0.8 H6 L7 2.2 H13.5" fill="none" stroke="#7c7c7c" stroke-width="1.6"/><path d="M0.5 4.5 H5.5 L7 6 H13.5 V13.5 H0.5 Z" fill="#ececec" stroke="#7c7c7c" stroke-width="1" stroke-linejoin="round"/></svg><div class="t" style="left:65.6px;top:4.64px;font-size:12px;line-height:14px;color:#000;">C:\Users\ujaval\Downlo</div><svg style="left:29px;top:26.599999999999994px" width="7" height="10" viewBox="0 0 7 10"><path d="M1 1 L6 5 L1 9 Z" fill="#fff" stroke="#8a8a8a" stroke-width="1"/></svg><svg style="left:44px;top:24.599999999999994px" width="14" height="14" viewBox="0 0 14 14"><path d="M0.5 2.5 H5.5 L7 4.5 H13.5 V13.5 H0.5 Z" fill="#ececec" stroke="#7c7c7c" stroke-width="1" stroke-linejoin="round"/></svg><div class="t" style="left:65.6px;top:24.64px;font-size:12px;line-height:14px;color:#000;">C:\Users\ujaval\Google</div><svg style="left:9px;top:46.599999999999994px" width="7" height="10" viewBox="0 0 7 10"><path d="M1 1 L6 5 L1 9 Z" fill="#fff" stroke="#8a8a8a" stroke-width="1"/></svg><svg style="left:23px;top:44.099999999999994px" width="15" height="15" viewBox="0 0 15 15"><path d="M0.5 2.5 H5.5 L7 0.8 H13.5 V13.5 H0.5 Z" fill="#ececec" stroke="#7c7c7c" stroke-width="1" stroke-linejoin="round"/><path d="M3.5 8 L7 4.8 L10.5 8 M4.8 7 V11 H9.2 V7" fill="#fff" stroke="#111" stroke-width="1"/></svg><div class="t" style="left:45.2px;top:44.64px;font-size:12px;line-height:14px;color:#000;transform:scaleX(1.0247);transform-origin:0 0;">Home</div><svg style="left:9px;top:66.6px" width="7" height="10" viewBox="0 0 7 10"><path d="M1 1 L6 5 L1 9 Z" fill="#fff" stroke="#8a8a8a" stroke-width="1"/></svg><svg style="left:23px;top:64.6px" width="14" height="14" viewBox="0 0 14 14"><path d="M0.5 2.5 H5.5 L7 4.5 H13.5 V13.5 H0.5 Z" fill="#ececec" stroke="#7c7c7c" stroke-width="1" stroke-linejoin="round"/></svg><div class="t" style="left:45.2px;top:64.64px;font-size:12px;line-height:14px;color:#000;">C:\</div><svg style="left:9px;top:86.60000000000002px" width="7" height="10" viewBox="0 0 7 10"><path d="M1 1 L6 5 L1 9 Z" fill="#fff" stroke="#8a8a8a" stroke-width="1"/></svg><svg style="left:23px;top:83.60000000000002px" width="16" height="16" viewBox="0 0 16 16"><circle cx="8" cy="6" r="5" fill="#7ea7d8" stroke="#4a7ab5" stroke-width="0.6"/><path d="M5 4 Q7 2 8.5 4 T11 6 Q9 8 7 6 Z" fill="#2f5f98"/><path d="M0.8 6.5 L8 10 V15.5 L0.8 12 Z" fill="#d6ac10" stroke="#333" stroke-width="0.7"/><path d="M8 10 L15.2 6.5 V12 L8 15.5 Z" fill="#f9ec6a" stroke="#333" stroke-width="0.7"/><path d="M0.8 6.5 L8 3.5 L15.2 6.5" fill="none" stroke="#333" stroke-width="0.5"/></svg><div class="t" style="left:45.2px;top:84.64px;font-size:12px;line-height:14px;color:#000;transform:scaleX(0.9311);transform-origin:0 0;">GeoPackage</div><svg style="left:23px;top:103.60000000000002px" width="16" height="16" viewBox="0 0 16 16"><path d="M0.5 15.5 C1.5 9 6 3 15.5 0.5 C14 5 12 8 9 10.5 C7 12 4 12.5 2.5 12.5 Z" fill="#9fbde0" stroke="#4a6a9a" stroke-width="0.7"/></svg><div class="t" style="left:45.2px;top:104.64px;font-size:12px;line-height:14px;color:#000;transform:scaleX(0.9480);transform-origin:0 0;">SpatiaLite</div><svg style="left:23px;top:123.60000000000002px" width="16" height="16" viewBox="0 0 16 16"><path d="M2 2 C4 0 12 0 14 2 C16 4 15 8 13 9 L12.5 12 L14.5 13 L12 14 L11 11 C10 12 9 15.5 7 15.5 C5 15.5 5 11 4 10 C2 8 0 4 2 2 Z" fill="#5b8dc8" stroke="#2f5a90" stroke-width="0.8"/><path d="M6 4 C5 7 6 9 7 10 M9 3 C11 5 11 8 10 10" stroke="#fff" stroke-width="0.8" fill="none"/></svg><div class="t" style="left:45.2px;top:124.64px;font-size:12px;line-height:14px;color:#000;transform:scaleX(0.8840);transform-origin:0 0;">PostGIS</div><svg style="left:9px;top:146.60000000000002px" width="7" height="10" viewBox="0 0 7 10"><path d="M1 1 L6 5 L1 9 Z" fill="#fff" stroke="#8a8a8a" stroke-width="1"/></svg><svg style="left:23px;top:143.60000000000002px" width="16" height="16" viewBox="0 0 16 16"><path d="M1 1 C7 1 13 4 15.5 7.5 C12 10 7 13 1.5 15 C4 11 4 5 1 1 Z" fill="#5b8dc8" stroke="#2f5a90" stroke-width="0.6"/><path d="M4.5 2.5 C6 6 6 10 5 13.5 M8 3.5 C9.5 6 9.5 10 8.5 12 M11 5 C12 7 12 9 11.5 10.5" stroke="#c8dcf2" stroke-width="0.7" fill="none"/></svg><div class="t" style="left:45.2px;top:144.64px;font-size:12px;line-height:14px;color:#000;transform:scaleX(0.8926);transform-origin:0 0;">MSSQL</div><svg style="left:9px;top:166.60000000000002px" width="7" height="10" viewBox="0 0 7 10"><path d="M1 1 L6 5 L1 9 Z" fill="#fff" stroke="#8a8a8a" stroke-width="1"/></svg><svg style="left:23px;top:163.60000000000002px" width="16" height="16" viewBox="0 0 16 16"><rect x="0.5" y="0.5" width="15.5" height="15" rx="2" fill="#6b9bd6"/><text x="1.6" y="11" font-family="Liberation Sans" font-size="7.2" fill="#e8f0fa">DB2</text></svg><div class="t" style="left:45.2px;top:164.64px;font-size:12px;line-height:14px;color:#000;">DB2</div></div><div style="left:200px;top:173px;width:16px;height:178px;background:#f0f0f0;border-left:1px solid #e8e8e8"></div><svg style="left:204px;top:179px" width="9" height="6" viewBox="0 0 9 6"><path d="M0.5 5 L4.5 1 L8.5 5 Z" fill="#444"/></svg><svg style="left:204px;top:338px" width="9" height="6" viewBox="0 0 9 6"><path d="M0.5 1 L4.5 5 L8.5 1 Z" fill="#444"/></svg><div style="left:200px;top:212px;width:15px;height:52px;border:1px solid #9a9a9a;border-radius:2px;background:linear-gradient(90deg,#f6f6f6 0,#ececec 45%,#d8d8d8 55%,#d4d4d4 100%)"></div><div style="left:204px;top:234px;width:7px;height:1px;background:#666;box-shadow:0 2px 0 #666,0 4px 0 #666"></div><div style="left:9px;top:351px;width:191px;height:16px;background:#f0f0f0;border-top:1px solid #e8e8e8"></div><div style="left:200px;top:351px;width:16px;height:16px;background:#f0f0f0"></div><svg style="left:14px;top:354px" width="6" height="9" viewBox="0 0 6 9"><path d="M5 0.5 L1 4.5 L5 8.5 Z" fill="#444"/></svg><svg style="left:189px;top:354px" width="6" height="9" viewBox="0 0 6 9"><path d="M1 0.5 L5 4.5 L1 8.5 Z" fill="#444"/></svg><div style="left:27px;top:351px;width:66px;height:15px;border:1px solid #9a9a9a;border-radius:2px;background:linear-gradient(180deg,#f6f6f6 0,#ececec 45%,#d8d8d8 55%,#d4d4d4 100%)"></div><div style="left:56px;top:355px;width:1px;height:7px;background:#555;box-shadow:3px 0 0 #555,6px 0 0 #555"></div><div style="left:8px;top:373px;width:209px;height:25px;background:#dadada;border:1px solid #c4c4c4"></div><div class="t" style="left:13.5px;top:379.64px;font-size:12px;line-height:14px;color:#000;">Layers</div><svg style="left:178px;top:378px" width="14" height="14" viewBox="0 0 14 14"><rect x="4" y="1" width="9" height="7" fill="none" stroke="#333" stroke-width="1.6"/><rect x="1" y="5" width="9" height="8" fill="#dadada" stroke="#333" stroke-width="1.6"/></svg><svg style="left:199px;top:380px" width="13" height="12" viewBox="0 0 13 12"><path d="M1.5 1 L11.5 11 M11.5 1 L1.5 11" stroke="#333" stroke-width="2.4"/></svg><svg style="left:13px;top:405px" width="16" height="16" viewBox="0 0 16 16"><path d="M1 9 L8 6 L11 13 L4 15.5 Z" fill="#e05050"/><path d="M1.5 7 L8 4.5 L10.5 11 L4 13.5 Z" fill="#f0c020"/><path d="M2 5.5 L8 3 L10 9.5 L4.5 11.5 Z" fill="#4f86cc"/><path d="M5 11 L8 7 L10 10 Z" fill="#d0a070"/><path d="M8.5 8.5 L15 1.5" stroke="#d89020" stroke-width="2"/></svg><svg style="left:37px;top:405px" width="16" height="16" viewBox="0 0 16 16"><path d="M1.5 8 V15.5 H9" fill="none" stroke="#888" stroke-width="0.9"/><rect x="4.5" y="3.5" width="9" height="10" fill="#f4f4f4" stroke="#888" stroke-width="0.9"/><path d="M7 8 V2 A1.5 1.5 0 0 1 10 2 V10" fill="none" stroke="#4a7ab5" stroke-width="1.1"/><circle cx="12.5" cy="13" r="2.8" fill="#8cc08c" stroke="#4a9a4a" stroke-width="1"/></svg><svg style="left:59px;top:405px" width="17" height="16" viewBox="0 0 17 16"><path d="M1 8 C4 3 12 3 15 8 C12 12.5 4 12.5 1 8 Z" fill="#fff" stroke="#999" stroke-width="0.8"/><circle cx="8" cy="7.5" r="3.5" fill="#4f86cc"/><circle cx="8" cy="7" r="1.3" fill="#1a2a4a"/><path d="M10.5 12 H16.5 L13.5 15 Z" fill="#111"/></svg><svg style="left:83px;top:405px" width="16" height="16" viewBox="0 0 16 16"><path d="M1 2 H15 L10 8 V15.5 L7 13.5 V8 Z" fill="#6d9ad6" stroke="#4a7ab5" stroke-width="0.8"/><path d="M1.5 2.2 H14.5" stroke="#f2d630" stroke-width="1.6"/></svg><svg style="left:106px;top:405px" width="16" height="16" viewBox="0 0 16 16"><text x="0" y="11" font-family="Liberation Serif" font-size="14" fill="#c8c8c8">&#949;</text><path d="M8 9 H15 L12.5 12 V15.5 L10.5 14.5 V12 Z" fill="#ddd"/></svg><svg style="left:127px;top:410px" width="8" height="5" viewBox="0 0 8 5"><path d="M0 0 L8 0 L4 4.5 Z" fill="#777"/></svg><svg style="left:141px;top:405px" width="16" height="16" viewBox="0 0 16 16"><path d="M1.5 1.5 V14.5 M1.5 2 H4 M1.5 8 H4 M1.5 14 H4" stroke="#888" stroke-width="0.9" fill="none"/><rect x="3.5" y="5" width="3" height="3" fill="#f0a020"/><rect x="3.5" y="11" width="3" height="3" fill="#f0a020"/><path d="M10.5 1 V9 H7.5 L11.5 14.5 L15.5 9 H12.5 V1 Z" fill="#5b8dc8" stroke="#2f5a90" stroke-width="0.8"/></svg><svg style="left:164px;top:405px" width="16" height="16" viewBox="0 0 16 16"><path d="M1.5 2.5 V14.5 M1.5 2.5 H5 M1.5 8.5 H4 M1.5 14.5 H4" stroke="#888" stroke-width="0.9" fill="none"/><rect x="3.5" y="6.5" width="3" height="3" fill="#f0a020"/><rect x="3.5" y="12" width="3" height="3" fill="#f0a020"/><path d="M10.5 15 V7 H7.5 L11.5 1.5 L15.5 7 H12.5 V15 Z" fill="#5b8dc8" stroke="#2f5a90" stroke-width="0.8"/></svg><svg style="left:187px;top:405px" width="16" height="16" viewBox="0 0 16 16"><rect x="1.5" y="1.5" width="11" height="11.5" fill="none" stroke="#777" stroke-width="1"/><rect x="9" y="11" width="6.5" height="4.5" rx="1.5" fill="#e03030"/><path d="M10.5 13.2 H14" stroke="#fff" stroke-width="1.2"/></svg><div style="left:8px;top:426px;width:209px;height:222px;background:#fff;border:1px solid #828790"></div><div style="left:32px;top:431.0px;width:13px;height:13px;border:1px solid #8e8f8f;background:linear-gradient(135deg,#dcdcdc,#f8f8f8)"></div><div style="left:34px;top:433.0px;width:9px;height:9px;border:1px solid #c4c4c4;background:linear-gradient(135deg,#cbcfd5,#f4f4f4)"></div><svg style="left:34px;top:432.0px" width="10" height="11" viewBox="0 0 10 11"><path d="M1.5 5.5 L4 9.5 L8.5 1" fill="none" stroke="#3c4fb5" stroke-width="1.7"/></svg><svg style="left:54px;top:433.0px" width="9" height="9" viewBox="0 0 9 9"><circle cx="4.5" cy="4.5" r="3.3" fill="#f08a1e" stroke="#333" stroke-width="0.7"/></svg><div class="t" style="left:73.1px;top:430.54px;font-size:12px;line-height:14px;color:#000;font-weight:700;transform:scaleX(0.9723);transform-origin:0 0;">selected</div><div style="left:32px;top:451.0px;width:13px;height:13px;border:1px solid #8e8f8f;background:linear-gradient(135deg,#dcdcdc,#f8f8f8)"></div><div style="left:34px;top:453.0px;width:9px;height:9px;border:1px solid #c4c4c4;background:linear-gradient(135deg,#cbcfd5,#f4f4f4)"></div><svg style="left:34px;top:452.0px" width="10" height="11" viewBox="0 0 10 11"><path d="M1.5 5.5 L4 9.5 L8.5 1" fill="none" stroke="#3c4fb5" stroke-width="1.7"/></svg><svg style="left:54px;top:453.0px" width="9" height="9" viewBox="0 0 9 9"><circle cx="4.5" cy="4.5" r="3.3" fill="#7a868e" stroke="#333" stroke-width="0.7"/></svg><div class="t" style="left:73.1px;top:450.54px;font-size:12px;line-height:14px;color:#000;font-weight:700;transform:scaleX(0.9591);transform-origin:0 0;">metro_stations</div><div style="left:32px;top:471.0px;width:13px;height:13px;border:1px solid #8e8f8f;background:linear-gradient(135deg,#dcdcdc,#f8f8f8)"></div><div style="left:34px;top:473.0px;width:9px;height:9px;border:1px solid #c4c4c4;background:linear-gradient(135deg,#cbcfd5,#f4f4f4)"></div><svg style="left:34px;top:472.0px" width="10" height="11" viewBox="0 0 10 11"><path d="M1.5 5.5 L4 9.5 L8.5 1" fill="none" stroke="#3c4fb5" stroke-width="1.7"/></svg><div style="left:51px;top:470.0px;width:16px;height:16px;background:#8cc084;border:1px solid #4f6f4a"></div><div class="t" style="left:73.1px;top:470.54px;font-size:12px;line-height:14px;color:#000;font-weight:700;transform:scaleX(0.9748);transform-origin:0 0;text-decoration:underline;">metro_station_buffers</div><div style="left:32px;top:491.0px;width:13px;height:13px;border:1px solid #8e8f8f;background:linear-gradient(135deg,#dcdcdc,#f8f8f8)"></div><div style="left:34px;top:493.0px;width:9px;height:9px;border:1px solid #c4c4c4;background:linear-gradient(135deg,#cbcfd5,#f4f4f4)"></div><svg style="left:54px;top:493.0px" width="9" height="9" viewBox="0 0 9 9"><circle cx="4.5" cy="4.5" r="3.3" fill="#8b4a2b" stroke="#333" stroke-width="0.7"/></svg><div class="t" style="left:73.1px;top:490.54px;font-size:12px;line-height:14px;color:#b4b4b4;font-weight:700;font-style:italic;transform:scaleX(0.9087);transform-origin:0 0;">bars_and_pubs</div><div style="left:32px;top:511.0px;width:13px;height:13px;border:1px solid #8e8f8f;background:linear-gradient(135deg,#dcdcdc,#f8f8f8)"></div><div style="left:34px;top:513.0px;width:9px;height:9px;border:1px solid #c4c4c4;background:linear-gradient(135deg,#cbcfd5,#f4f4f4)"></div><svg style="left:54px;top:513.0px" width="9" height="9" viewBox="0 0 9 9"><circle cx="4.5" cy="4.5" r="3.3" fill="#e8b830" stroke="#333" stroke-width="0.7"/></svg><div class="t" style="left:73.1px;top:510.54px;font-size:12px;line-height:14px;color:#b4b4b4;font-weight:700;font-style:italic;transform:scaleX(0.9303);transform-origin:0 0;">Bars_and_pubs__with_...</div><div style="left:32px;top:531.0px;width:13px;height:13px;border:1px solid #8e8f8f;background:linear-gradient(135deg,#dcdcdc,#f8f8f8)"></div><div style="left:34px;top:533.0px;width:9px;height:9px;border:1px solid #c4c4c4;background:linear-gradient(135deg,#cbcfd5,#f4f4f4)"></div><svg style="left:54px;top:533.0px" width="9" height="9" viewBox="0 0 9 9"><circle cx="4.5" cy="4.5" r="3.3" fill="#e0508a" stroke="#333" stroke-width="0.7"/></svg><div class="t" style="left:73.1px;top:530.54px;font-size:12px;line-height:14px;color:#b4b4b4;font-weight:700;font-style:italic;transform:scaleX(0.9388);transform-origin:0 0;">metro_stations_access...</div><div style="left:22px;top:425px;width:179px;height:64px;border:2px solid #ff0000"></div><div style="left:221px;top:119px;width:699px;height:529px;background:#fff;border:1px solid #6d7889;border-right:none"></div><div style="left:222px;top:120px;width:698px;height:527px;overflow:hidden"><svg width="698" height="528" viewBox="222 120 698 528" style="position:absolute;left:0;top:0"><g fill="#bdd5b3" stroke="#7f7f7f" stroke-width="0.9"><polygon points="241.00,142.00 238.45,158.07 231.07,172.56 219.56,184.07 205.07,191.45 189.00,194.00 172.93,191.45 158.44,184.07 146.93,172.56 139.55,158.07 137.00,142.00 139.55,125.93 146.93,111.44 158.44,99.93 172.93,92.55 189.00,90.00 205.07,92.55 219.56,99.93 231.07,111.44 238.45,125.93"/><polygon points="370.00,177.00 367.45,193.07 360.07,207.56 348.56,219.07 334.07,226.45 318.00,229.00 301.93,226.45 287.44,219.07 275.93,207.56 268.55,193.07 266.00,177.00 268.55,160.93 275.93,146.44 287.44,134.93 301.93,127.55 318.00,125.00 334.07,127.55 348.56,134.93 360.07,146.44 367.45,160.93"/><polygon points="340.00,324.00 337.45,340.07 330.07,354.56 318.56,366.07 304.07,373.45 288.00,376.00 271.93,373.45 257.44,366.07 245.93,354.56 238.55,340.07 236.00,324.00 238.55,307.93 245.93,293.44 257.44,281.93 271.93,274.55 288.00,272.00 304.07,274.55 318.56,281.93 330.07,293.44 337.45,307.93"/><polygon points="386.00,253.00 383.45,269.07 376.07,283.56 364.56,295.07 350.07,302.45 334.00,305.00 317.93,302.45 303.44,295.07 291.93,283.56 284.55,269.07 282.00,253.00 284.55,236.93 291.93,222.44 303.44,210.93 317.93,203.55 334.00,201.00 350.07,203.55 364.56,210.93 376.07,222.44 383.45,236.93"/><polygon points="437.50,263.60 434.95,279.67 427.57,294.16 416.06,305.67 401.57,313.05 385.50,315.60 369.43,313.05 354.94,305.67 343.43,294.16 336.05,279.67 333.50,263.60 336.05,247.53 343.43,233.04 354.94,221.53 369.43,214.15 385.50,211.60 401.57,214.15 416.06,221.53 427.57,233.04 434.95,247.53"/><polygon points="465.00,190.00 462.45,206.07 455.07,220.56 443.56,232.07 429.07,239.45 413.00,242.00 396.93,239.45 382.44,232.07 370.93,220.56 363.55,206.07 361.00,190.00 363.55,173.93 370.93,159.44 382.44,147.93 396.93,140.55 413.00,138.00 429.07,140.55 443.56,147.93 455.07,159.44 462.45,173.93"/><polygon points="578.00,106.00 575.45,122.07 568.07,136.56 556.56,148.07 542.07,155.45 526.00,158.00 509.93,155.45 495.44,148.07 483.93,136.56 476.55,122.07 474.00,106.00 476.55,89.93 483.93,75.44 495.44,63.93 509.93,56.55 526.00,54.00 542.07,56.55 556.56,63.93 568.07,75.44 575.45,89.93"/><polygon points="493.00,403.00 490.45,419.07 483.07,433.56 471.56,445.07 457.07,452.45 441.00,455.00 424.93,452.45 410.44,445.07 398.93,433.56 391.55,419.07 389.00,403.00 391.55,386.93 398.93,372.44 410.44,360.93 424.93,353.55 441.00,351.00 457.07,353.55 471.56,360.93 483.07,372.44 490.45,386.93"/><polygon points="628.00,459.00 625.45,475.07 618.07,489.56 606.56,501.07 592.07,508.45 576.00,511.00 559.93,508.45 545.44,501.07 533.93,489.56 526.55,475.07 524.00,459.00 526.55,442.93 533.93,428.44 545.44,416.93 559.93,409.55 576.00,407.00 592.07,409.55 606.56,416.93 618.07,428.44 625.45,442.93"/><polygon points="694.00,433.00 691.45,449.07 684.07,463.56 672.56,475.07 658.07,482.45 642.00,485.00 625.93,482.45 611.44,475.07 599.93,463.56 592.55,449.07 590.00,433.00 592.55,416.93 599.93,402.44 611.44,390.93 625.93,383.55 642.00,381.00 658.07,383.55 672.56,390.93 684.07,402.44 691.45,416.93"/><polygon points="591.00,534.00 588.45,550.07 581.07,564.56 569.56,576.07 555.07,583.45 539.00,586.00 522.93,583.45 508.44,576.07 496.93,564.56 489.55,550.07 487.00,534.00 489.55,517.93 496.93,503.44 508.44,491.93 522.93,484.55 539.00,482.00 555.07,484.55 569.56,491.93 581.07,503.44 588.45,517.93"/><polygon points="726.00,532.00 723.45,548.07 716.07,562.56 704.56,574.07 690.07,581.45 674.00,584.00 657.93,581.45 643.44,574.07 631.93,562.56 624.55,548.07 622.00,532.00 624.55,515.93 631.93,501.44 643.44,489.93 657.93,482.55 674.00,480.00 690.07,482.55 704.56,489.93 716.07,501.44 723.45,515.93"/><polygon points="782.00,456.50 779.45,472.57 772.07,487.06 760.56,498.57 746.07,505.95 730.00,508.50 713.93,505.95 699.44,498.57 687.93,487.06 680.55,472.57 678.00,456.50 680.55,440.43 687.93,425.94 699.44,414.43 713.93,407.05 730.00,404.50 746.07,407.05 760.56,414.43 772.07,425.94 779.45,440.43"/><polygon points="949.00,121.00 946.45,137.07 939.07,151.56 927.56,163.07 913.07,170.45 897.00,173.00 880.93,170.45 866.44,163.07 854.93,151.56 847.55,137.07 845.00,121.00 847.55,104.93 854.93,90.44 866.44,78.93 880.93,71.55 897.00,69.00 913.07,71.55 927.56,78.93 939.07,90.44 946.45,104.93"/><polygon points="979.00,177.00 976.45,193.07 969.07,207.56 957.56,219.07 943.07,226.45 927.00,229.00 910.93,226.45 896.44,219.07 884.93,207.56 877.55,193.07 875.00,177.00 877.55,160.93 884.93,146.44 896.44,134.93 910.93,127.55 927.00,125.00 943.07,127.55 957.56,134.93 969.07,146.44 976.45,160.93"/><polygon points="967.00,367.60 964.45,383.67 957.07,398.16 945.56,409.67 931.07,417.05 915.00,419.60 898.93,417.05 884.44,409.67 872.93,398.16 865.55,383.67 863.00,367.60 865.55,351.53 872.93,337.04 884.44,325.53 898.93,318.15 915.00,315.60 931.07,318.15 945.56,325.53 957.07,337.04 964.45,351.53"/><polygon points="972.00,308.00 969.45,324.07 962.07,338.56 950.56,350.07 936.07,357.45 920.00,360.00 903.93,357.45 889.44,350.07 877.93,338.56 870.55,324.07 868.00,308.00 870.55,291.93 877.93,277.44 889.44,265.93 903.93,258.55 920.00,256.00 936.07,258.55 950.56,265.93 962.07,277.44 969.45,291.93"/><polygon points="957.00,431.50 954.45,447.57 947.07,462.06 935.56,473.57 921.07,480.95 905.00,483.50 888.93,480.95 874.44,473.57 862.93,462.06 855.55,447.57 853.00,431.50 855.55,415.43 862.93,400.94 874.44,389.43 888.93,382.05 905.00,379.50 921.07,382.05 935.56,389.43 947.07,400.94 954.45,415.43"/><polygon points="880.00,507.00 877.45,523.07 870.07,537.56 858.56,549.07 844.07,556.45 828.00,559.00 811.93,556.45 797.44,549.07 785.93,537.56 778.55,523.07 776.00,507.00 778.55,490.93 785.93,476.44 797.44,464.93 811.93,457.55 828.00,455.00 844.07,457.55 858.56,464.93 870.07,476.44 877.45,490.93"/><polygon points="951.00,481.70 948.45,497.77 941.07,512.26 929.56,523.77 915.07,531.15 899.00,533.70 882.93,531.15 868.44,523.77 856.93,512.26 849.55,497.77 847.00,481.70 849.55,465.63 856.93,451.14 868.44,439.63 882.93,432.25 899.00,429.70 915.07,432.25 929.56,439.63 941.07,451.14 948.45,465.63"/><polygon points="995.00,606.00 992.45,622.07 985.07,636.56 973.56,648.07 959.07,655.45 943.00,658.00 926.93,655.45 912.44,648.07 900.93,636.56 893.55,622.07 891.00,606.00 893.55,589.93 900.93,575.44 912.44,563.93 926.93,556.55 943.00,554.00 959.07,556.55 973.56,563.93 985.07,575.44 992.45,589.93"/><polygon points="934.00,592.00 931.45,608.07 924.07,622.56 912.56,634.07 898.07,641.45 882.00,644.00 865.93,641.45 851.44,634.07 839.93,622.56 832.55,608.07 830.00,592.00 832.55,575.93 839.93,561.44 851.44,549.93 865.93,542.55 882.00,540.00 898.07,542.55 912.56,549.93 924.07,561.44 931.45,575.93"/></g><g fill="#7f8c94" stroke="#333" stroke-width="1"><circle cx="318" cy="177" r="3.6"/><circle cx="413" cy="190" r="3.6"/><circle cx="334" cy="253" r="3.6"/><circle cx="385.5" cy="263.6" r="3.6"/><circle cx="288" cy="324" r="3.6"/><circle cx="441" cy="403" r="3.6"/><circle cx="576" cy="459" r="3.6"/><circle cx="642" cy="433" r="3.6"/><circle cx="731" cy="457" r="3.6"/><circle cx="539" cy="534" r="3.6"/><circle cx="674" cy="532" r="3.6"/><circle cx="897" cy="121" r="3.6"/><circle cx="915" cy="367.6" r="3.6"/><circle cx="905" cy="431.5" r="3.6"/><circle cx="899" cy="481.7" r="3.6"/><circle cx="828" cy="507" r="3.6"/><circle cx="882" cy="592" r="3.6"/></g><defs><g id="od"><path d="M-0.7 -4.8 H0.7 V-3.6 H-0.7 Z M-0.7 3.6 H0.7 V4.8 H-0.7 Z M-4.8 -0.7 V0.7 H-3.6 V-0.7 Z M3.6 -0.7 V0.7 H4.8 V-0.7 Z" fill="#111"/><circle r="3.85" fill="#ff7f00" stroke="#111" stroke-width="1.3"/></g></defs><g><use href="#od" x="349.8" y="195.6"/><use href="#od" x="348.9" y="204.9"/><use href="#od" x="316.7" y="259.7"/><use href="#od" x="413.7" y="271.7"/><use href="#od" x="369.7" y="304.7"/><use href="#od" x="442.8" y="394.9"/><use href="#od" x="487.7" y="409.7"/><use href="#od" x="823.6" y="499.9"/><use href="#od" x="822.9" y="547.0"/><use href="#od" x="738.1" y="487.2"/><use href="#od" x="591.8" y="413.7"/><use href="#od" x="587.8" y="434.0"/><use href="#od" x="584.5" y="438.1"/><use href="#od" x="576.9" y="471.7"/><use href="#od" x="555.7" y="480.0"/><use href="#od" x="609.9" y="404.9"/><use href="#od" x="621.9" y="407.6"/><use href="#od" x="614.9" y="417.6"/><use href="#od" x="599.7" y="424.8"/><use href="#od" x="611.8" y="427.8"/><use href="#od" x="612.8" y="445.7"/><use href="#od" x="621.9" y="450.6"/><use href="#od" x="607.7" y="455.6"/><use href="#od" x="610.8" y="458.5"/><use href="#od" x="614.9" y="461.7"/><use href="#od" x="607.7" y="467.9"/><use href="#od" x="621.9" y="469.6"/><use href="#od" x="614.9" y="474.9"/><use href="#od" x="605.8" y="481.5"/><use href="#od" x="617.5" y="482.7"/><use href="#od" x="625.8" y="480.8"/><use href="#od" x="629.8" y="416.5"/><use href="#od" x="601.2" y="424.5"/><use href="#od" x="658.9" y="391.7"/><use href="#od" x="662.9" y="406.7"/><use href="#od" x="680.8" y="410.8"/><use href="#od" x="648.9" y="414.8"/><use href="#od" x="631.9" y="416.9"/><use href="#od" x="634.2" y="418.9"/><use href="#od" x="673.8" y="415.7"/><use href="#od" x="636.9" y="425.7"/><use href="#od" x="676.7" y="422.7"/><use href="#od" x="686.7" y="424.8"/><use href="#od" x="697.8" y="427.4"/><use href="#od" x="669.1" y="426.8"/><use href="#od" x="670.8" y="429.8"/><use href="#od" x="672.6" y="437.0"/><use href="#od" x="674.9" y="440.9"/><use href="#od" x="659.7" y="443.5"/><use href="#od" x="635.7" y="444.4"/><use href="#od" x="645.1" y="444.4"/><use href="#od" x="645.7" y="448.5"/><use href="#od" x="642.7" y="452.0"/><use href="#od" x="648.0" y="453.2"/><use href="#od" x="657.4" y="453.8"/><use href="#od" x="665.0" y="451.4"/><use href="#od" x="673.8" y="453.8"/><use href="#od" x="677.9" y="446.7"/><use href="#od" x="683.7" y="447.3"/><use href="#od" x="685.5" y="450.3"/><use href="#od" x="692.5" y="440.9"/><use href="#od" x="694.8" y="440.3"/><use href="#od" x="694.3" y="454.9"/><use href="#od" x="685.5" y="457.9"/><use href="#od" x="695.4" y="457.9"/><use href="#od" x="711.6" y="418.7"/><use href="#od" x="706.3" y="425.8"/><use href="#od" x="709.3" y="425.2"/><use href="#od" x="690.0" y="441.6"/><use href="#od" x="718.1" y="442.2"/><use href="#od" x="722.2" y="445.7"/><use href="#od" x="723.9" y="448.0"/><use href="#od" x="704.6" y="448.6"/><use href="#od" x="711.0" y="448.6"/><use href="#od" x="711.6" y="452.7"/><use href="#od" x="688.2" y="462.6"/><use href="#od" x="702.2" y="456.8"/><use href="#od" x="708.1" y="459.7"/><use href="#od" x="713.4" y="459.1"/><use href="#od" x="718.1" y="456.8"/><use href="#od" x="719.2" y="460.3"/><use href="#od" x="726.8" y="458.0"/><use href="#od" x="691.7" y="467.9"/><use href="#od" x="711.0" y="467.3"/><use href="#od" x="713.4" y="467.3"/><use href="#od" x="691.1" y="475.5"/><use href="#od" x="705.8" y="478.5"/><use href="#od" x="732.1" y="477.3"/><use href="#od" x="680.0" y="465.0"/><use href="#od" x="592.9" y="493.9"/><use href="#od" x="636.8" y="469.9"/><use href="#od" x="643.8" y="475.8"/><use href="#od" x="638.5" y="478.1"/><use href="#od" x="653.8" y="471.7"/><use href="#od" x="651.4" y="462.9"/><use href="#od" x="660.2" y="461.1"/><use href="#od" x="656.1" y="458.8"/><use href="#od" x="670.7" y="465.8"/><use href="#od" x="677.2" y="464.1"/><use href="#od" x="670.7" y="474.6"/><use href="#od" x="673.7" y="479.9"/><use href="#od" x="678.4" y="481.0"/><use href="#od" x="679.0" y="487.5"/><use href="#od" x="666.1" y="484.0"/><use href="#od" x="660.8" y="491.0"/><use href="#od" x="645.6" y="492.7"/><use href="#od" x="653.8" y="496.3"/><use href="#od" x="657.9" y="499.8"/><use href="#od" x="650.8" y="502.1"/><use href="#od" x="636.8" y="502.1"/><use href="#od" x="638.0" y="505.0"/><use href="#od" x="666.1" y="509.7"/><use href="#od" x="660.8" y="512.1"/><use href="#od" x="657.9" y="519.7"/><use href="#od" x="646.7" y="516.2"/><use href="#od" x="649.1" y="521.4"/><use href="#od" x="643.8" y="524.4"/><use href="#od" x="638.0" y="526.7"/><use href="#od" x="651.4" y="527.3"/><use href="#od" x="673.7" y="520.3"/><use href="#od" x="587.0" y="523.2"/><use href="#od" x="558.7" y="494.6"/><use href="#od" x="562.6" y="499.9"/><use href="#od" x="567.8" y="497.2"/><use href="#od" x="569.6" y="502.5"/><use href="#od" x="495.8" y="514.8"/><use href="#od" x="550.8" y="514.8"/><use href="#od" x="552.9" y="523.6"/><use href="#od" x="553.8" y="528.0"/><use href="#od" x="566.6" y="522.7"/><use href="#od" x="576.6" y="518.8"/><use href="#od" x="571.7" y="532.4"/><use href="#od" x="539.7" y="532.7"/><use href="#od" x="499.7" y="545.9"/><use href="#od" x="561.7" y="544.7"/><use href="#od" x="586.8" y="546.8"/><use href="#od" x="583.7" y="554.7"/><use href="#od" x="565.7" y="555.7"/><use href="#od" x="567.8" y="561.4"/><use href="#od" x="571.4" y="559.6"/><use href="#od" x="519.9" y="561.7"/><use href="#od" x="680.9" y="487.2"/><use href="#od" x="638.2" y="530.0"/><use href="#od" x="651.9" y="529.1"/><use href="#od" x="627.7" y="536.1"/><use href="#od" x="635.0" y="536.1"/><use href="#od" x="660.0" y="536.1"/><use href="#od" x="699.7" y="525.9"/><use href="#od" x="656.7" y="547.7"/><use href="#od" x="668.0" y="558.9"/><use href="#od" x="685.7" y="561.8"/><use href="#od" x="637.4" y="563.8"/><use href="#od" x="641.4" y="561.8"/><use href="#od" x="652.7" y="571.0"/><use href="#od" x="685.7" y="509.0"/><use href="#od" x="688.1" y="512.2"/><use href="#od" x="694.6" y="509.8"/><use href="#od" x="693.8" y="503.4"/><use href="#od" x="698.6" y="494.5"/><use href="#od" x="703.4" y="500.9"/><use href="#od" x="709.9" y="500.1"/><use href="#od" x="711.5" y="504.2"/><use href="#od" x="715.5" y="497.7"/><use href="#od" x="715.5" y="503.4"/><use href="#od" x="726.0" y="497.7"/><use href="#od" x="713.1" y="484.8"/><use href="#od" x="705.1" y="481.6"/><use href="#od" x="701.8" y="481.6"/></g></svg></div><div style="left:12px;top:652px;width:200px;height:20px;background:#fff;border:1px solid #d9d9d9;border-radius:2px"></div><svg style="left:20px;top:656px" width="14" height="13" viewBox="0 0 14 13"><circle cx="5.5" cy="5.2" r="4.2" fill="none" stroke="#8a8a8a" stroke-width="1.3"/><path d="M8.5 8.3 L12.5 12.3" stroke="#8a8a8a" stroke-width="1.6"/></svg><div class="t" style="left:41px;top:655.99px;font-size:11px;line-height:13px;color:#6d6d6d;">Type to locate (Ctrl+K)</div><div style="left:219px;top:650px;width:22px;height:22px;overflow:hidden"><div class="t" style="left:1px;top:5.99px;font-size:11px;line-height:13px;color:#000;">2 legend</div></div><div style="left:248px;top:650px;width:21.5px;height:22px;overflow:hidden"><div class="t" style="left:-15.5px;top:5.99px;font-size:11px;line-height:13px;color:#000;transform:scaleX(0.9477);transform-origin:0 0;">Coordinate</div></div><div style="left:272px;top:652px;width:91px;height:20px;background:#fff;border:1px solid #d9d9d9;border-radius:2px"></div><div class="t" style="left:275.6px;top:655.99px;font-size:11px;line-height:13px;color:#000;transform:scaleX(0.9917);transform-origin:0 0;">317370,5816236</div><svg style="left:366px;top:654px" width="17" height="16" viewBox="0 0 17 16"><path d="M3 2 C6 0 9 1 10 4 L12 9 C13 12 11 15 8 15 C5 15 3.5 13 3 11 L1.5 6 C1 4 1.5 3 3 2 Z" fill="#555" stroke="#222" stroke-width="0.7"/><path d="M5 3 L7 7" stroke="#fff" stroke-width="1.4"/><circle cx="8" cy="11.5" r="2.5" fill="#fff" stroke="#333" stroke-width="0.6"/><circle cx="8" cy="11.5" r="0.9" fill="#333"/><path d="M12 3 L14.5 1 M13 5 L16 4" stroke="#888" stroke-width="0.7"/></svg><div style="left:395px;top:650px;width:6px;height:22px;overflow:hidden"><div class="t" style="left:0px;top:5.99px;font-size:11px;line-height:13px;color:#000;">a</div></div><div style="left:403px;top:652px;width:78px;height:20px;background:#fff;border:1px solid #d9d9d9;border-radius:2px"></div><div class="t" style="left:408.6px;top:655.99px;font-size:11px;line-height:13px;color:#000;">1:36411</div><svg style="left:469px;top:660px" width="8" height="5" viewBox="0 0 8 5"><path d="M0 0 H7.5 L3.75 4.5 Z" fill="#000"/></svg><svg style="left:491px;top:655px" width="14" height="15" viewBox="0 0 14 15"><path d="M3.5 7 V4.5 A3 3 0 0 1 9.5 4.5 V7" fill="none" stroke="#6a6a6a" stroke-width="1.8"/><rect x="1" y="6.5" width="11.5" height="8" rx="2" fill="#626262"/></svg><div style="left:512px;top:650px;width:12px;height:22px;overflow:hidden"><div class="t" style="left:-2px;top:5.99px;font-size:11px;line-height:13px;color:#000;">gnifier</div></div><div style="left:526px;top:652px;width:81px;height:20px;background:#fff;border:1px solid #d9d9d9;border-radius:2px"></div><div class="t" style="left:529.5px;top:655.99px;font-size:11px;line-height:13px;color:#000;transform:scaleX(0.9775);transform-origin:0 0;">100%</div><div style="left:592px;top:654px;width:14px;height:16px;border:1px solid #a9a9a9;background:#f2f2f2"></div><div style="left:593px;top:661px;width:12px;height:1px;background:#c0c0c0"></div><svg style="left:595px;top:656px" width="8" height="5" viewBox="0 0 8 5"><path d="M0.5 4.5 L4 0.8 L7.5 4.5 Z" fill="#5a6fb8"/></svg><svg style="left:595px;top:663px" width="8" height="5" viewBox="0 0 8 5"><path d="M0.5 0.5 L4 4.2 L7.5 0.5 Z" fill="#5a6fb8"/></svg><div style="left:616px;top:650px;width:8px;height:22px;overflow:hidden"><div class="t" style="left:1px;top:5.99px;font-size:11px;line-height:13px;color:#000;">ati</div></div><div style="left:633px;top:652px;width:79px;height:20px;background:#fff;border:1px solid #d9d9d9;border-radius:2px"></div><div class="t" style="left:635.6px;top:655.99px;font-size:11px;line-height:13px;color:#000;transform:scaleX(1.0815);transform-origin:0 0;">0.0 °</div><div style="left:697px;top:654px;width:14px;height:16px;border:1px solid #a9a9a9;background:#f2f2f2"></div><div style="left:698px;top:661px;width:12px;height:1px;background:#c0c0c0"></div><svg style="left:700px;top:656px" width="8" height="5" viewBox="0 0 8 5"><path d="M0.5 4.5 L4 0.8 L7.5 4.5 Z" fill="#5a6fb8"/></svg><svg style="left:700px;top:663px" width="8" height="5" viewBox="0 0 8 5"><path d="M0.5 0.5 L4 4.2 L7.5 0.5 Z" fill="#5a6fb8"/></svg><div style="left:719px;top:655px;width:13px;height:13px;border:1px solid #8e8f8f;background:linear-gradient(135deg,#dcdcdc,#f8f8f8)"></div><div style="left:721px;top:657px;width:9px;height:9px;border:1px solid #c4c4c4;background:linear-gradient(135deg,#cbcfd5,#f4f4f4)"></div><svg style="left:721px;top:656px" width="10" height="11" viewBox="0 0 10 11"><path d="M1.5 5.5 L4 9.5 L8.5 1" fill="none" stroke="#3c4fb5" stroke-width="1.7"/></svg><div class="t" style="left:736.3px;top:655.99px;font-size:11px;line-height:13px;color:#000;transform:scaleX(0.9480);transform-origin:0 0;">Render</div><div style="left:782px;top:649px;width:87px;height:24px;border:2px solid #ff0000"></div><svg style="left:788px;top:655px" width="17" height="14" viewBox="0 0 17 14"><g fill="none" stroke="#7a7a7a" stroke-width="1"><ellipse cx="8.5" cy="7" rx="6.5" ry="6"/><ellipse cx="8.5" cy="7" rx="3" ry="6"/><path d="M2 7 H15 M3 4 H14 M3 10 H14 M8.5 1 V13"/></g><path d="M0.5 7 L3 5 V9 Z" fill="#7a7a7a"/></svg><div class="t" style="left:808px;top:655.99px;font-size:11px;line-height:13px;color:#000;transform:scaleX(0.9261);transform-origin:0 0;">EPSG:7855</div><svg style="left:877px;top:654px" width="18" height="16" viewBox="0 0 18 16"><ellipse cx="8.5" cy="7" rx="8" ry="6.5" fill="#666"/><path d="M9 12 L14 15.5 L12 10.5 Z" fill="#666"/><circle cx="4.8" cy="7" r="1.3" fill="#fff"/><circle cx="8.5" cy="7" r="1.3" fill="#fff"/><circle cx="12.2" cy="7" r="1.3" fill="#fff"/></svg><div style="left:917px;top:664px;width:2px;height:2px;background:#b4b4b4;box-shadow:1px 1px 0 #fff"></div><div style="left:913px;top:668px;width:2px;height:2px;background:#b4b4b4;box-shadow:1px 1px 0 #fff"></div><div style="left:917px;top:668px;width:2px;height:2px;background:#b4b4b4;box-shadow:1px 1px 0 #fff"></div><div style="left:909px;top:672px;width:2px;height:2px;background:#b4b4b4;box-shadow:1px 1px 0 #fff"></div><div style="left:913px;top:672px;width:2px;height:2px;background:#b4b4b4;box-shadow:1px 1px 0 #fff"></div><div style="left:917px;top:672px;width:2px;height:2px;background:#b4b4b4;box-shadow:1px 1px 0 #fff"></div><svg style="left:76px;top:621px" width="13" height="21" viewBox="0 0 13 21"><path d="M0.5 0.5 L0.5 16.5 L4.3 13 L7.2 19 L9.8 17.8 L7.2 12 L11.8 12 Z" fill="#fff" stroke="#111827" stroke-width="1.05" stroke-linejoin="round"/></svg></body></html>
